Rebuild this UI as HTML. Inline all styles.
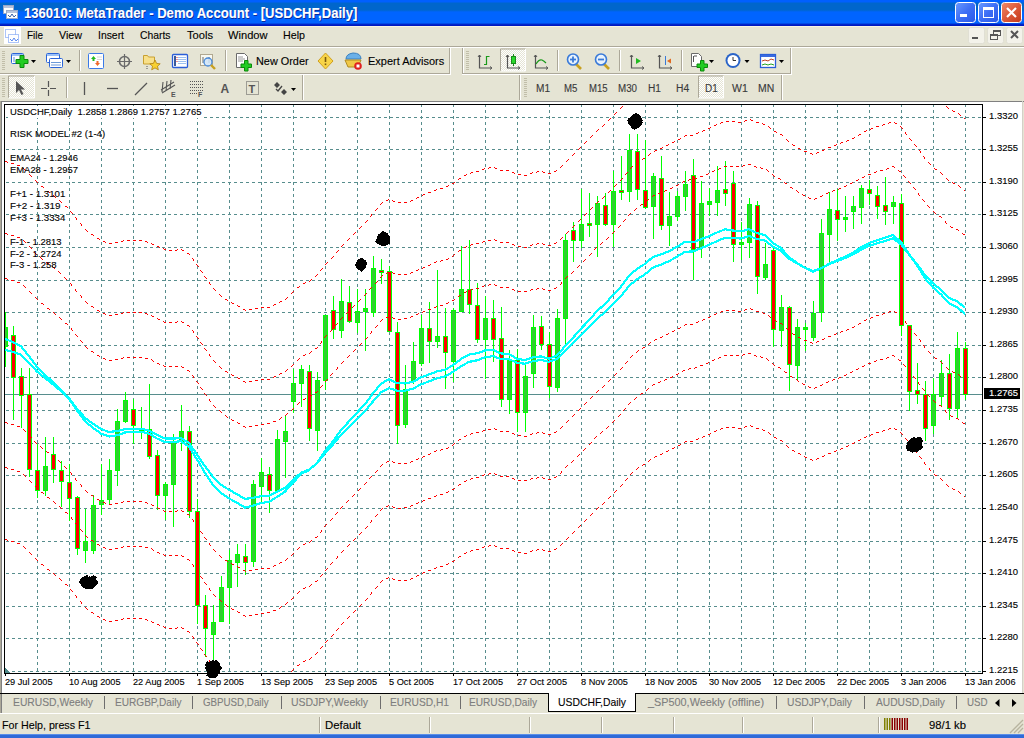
<!DOCTYPE html>
<html><head><meta charset="utf-8">
<style>
*{margin:0;padding:0;box-sizing:border-box}
html,body{width:1024px;height:738px;overflow:hidden;background:#e5e4d4;font-family:"Liberation Sans",sans-serif;color:#000;position:relative}
.abs{position:absolute}
.tx{position:absolute;white-space:nowrap;-webkit-text-stroke:0.12px currentColor}
</style></head><body>
<div class="abs" style="left:0;top:0;width:1024px;height:26px;background:linear-gradient(to bottom,#0060ff 0px,#0060ff 2px,#0066cc 3px,#0066cc 10px,#0064ff 12px,#0064ff 23px,#0030d0 24px,#0018c0 25px,#0018c0 26px)"></div>
<div class="tx" style="left:24px;top:6.35px;font-size:14px;line-height:14px;color:#fff;font-weight:bold;transform:scaleX(0.935);transform-origin:0 0;text-shadow:1px 1px 0 #0a2a9a;">136010: MetaTrader - Demo Account - [USDCHF,Daily]</div>
<svg class="abs" style="left:0;top:0" width="24" height="26">
<rect x="3.5" y="5.5" width="10" height="8" fill="#fff" stroke="#9aa8c8"/><rect x="4" y="6" width="9" height="2" fill="#b8c4dc"/>
<rect x="6.5" y="10.5" width="11" height="8" fill="#fff" stroke="#9aa8c8"/><rect x="7" y="11" width="10" height="2" fill="#b8c4dc"/>
<path d="M8 15 l2 2 l2 -3 l2 3 l2 -2" stroke="#3b5fa8" fill="none" stroke-width="1"/>
</svg>
<svg class="abs" style="left:950px;top:0" width="74" height="26">
<defs>
<linearGradient id="bb" x1="0" y1="0" x2="1" y2="1"><stop offset="0" stop-color="#6a9aff"/><stop offset="0.5" stop-color="#3d6ef5"/><stop offset="1" stop-color="#2858e8"/></linearGradient>
<linearGradient id="rb" x1="0" y1="0" x2="1" y2="1"><stop offset="0" stop-color="#f08a6a"/><stop offset="0.5" stop-color="#dc5a3a"/><stop offset="1" stop-color="#c43a1c"/></linearGradient>
</defs>
<rect x="5.5" y="2.5" width="20" height="20" rx="3" fill="url(#bb)" stroke="#fff"/>
<rect x="10" y="14" width="7" height="3" fill="#fff"/>
<rect x="28.5" y="2.5" width="20" height="20" rx="3" fill="url(#bb)" stroke="#fff"/>
<rect x="33.5" y="7.5" width="10" height="10" fill="none" stroke="#fff"/><rect x="33" y="7" width="11" height="3" fill="#fff"/>
<rect x="51.5" y="2.5" width="20" height="20" rx="3" fill="url(#rb)" stroke="#fff"/>
<path d="M57 8 L66 17 M66 8 L57 17" stroke="#fff" stroke-width="2.2"/>
</svg>
<div class="abs" style="left:0;top:26px;width:1024px;height:1px;background:#f6f4e4"></div>
<svg class="abs" style="left:0;top:26px" width="24" height="20">
<rect x="4" y="1" width="17" height="17" fill="#fff"/>
<rect x="5.5" y="3.5" width="10" height="8" fill="none" stroke="#5a8af0" stroke-dasharray="1 1"/>
<rect x="8.5" y="8.5" width="10" height="8" fill="#fff" stroke="#5a8af0" stroke-dasharray="1 1"/>
<path d="M10 13 l2 2 l2 -3 l2 3 l2 -2" stroke="#5a8af0" fill="none" stroke-width="1"/>
</svg>
<div class="tx" style="left:27px;top:30.29px;font-size:11px;line-height:11px;color:#000;font-weight:normal;transform:scaleX(0.9026997245179064);transform-origin:0 0;">File</div>
<div class="tx" style="left:59px;top:30.29px;font-size:11px;line-height:11px;color:#000;font-weight:normal;transform:scaleX(0.9727809673289001);transform-origin:0 0;">View</div>
<div class="tx" style="left:98px;top:30.29px;font-size:11px;line-height:11px;color:#000;font-weight:normal;transform:scaleX(0.9450853714813106);transform-origin:0 0;">Insert</div>
<div class="tx" style="left:139.5px;top:30.29px;font-size:11px;line-height:11px;color:#000;font-weight:normal;transform:scaleX(0.9414034241620448);transform-origin:0 0;">Charts</div>
<div class="tx" style="left:186.5px;top:30.29px;font-size:11px;line-height:11px;color:#000;font-weight:normal;transform:scaleX(1.0124926318191325);transform-origin:0 0;">Tools</div>
<div class="tx" style="left:228px;top:30.29px;font-size:11px;line-height:11px;color:#000;font-weight:normal;transform:scaleX(1.0096350656482451);transform-origin:0 0;">Window</div>
<div class="tx" style="left:283px;top:30.29px;font-size:11px;line-height:11px;color:#000;font-weight:normal;transform:scaleX(0.9724596391263058);transform-origin:0 0;">Help</div>
<svg class="abs" style="left:964px;top:26px" width="60" height="20">
<rect x="4.5" y="1.5" width="16" height="16" rx="2" fill="#f3f2ea" stroke="#e0dfd4"/>
<rect x="8" y="11" width="6" height="2" fill="#555"/>
<rect x="23.5" y="1.5" width="16" height="16" rx="2" fill="#f3f2ea" stroke="#e0dfd4"/>
<rect x="29.5" y="4.5" width="7" height="5" fill="none" stroke="#555"/><rect x="29" y="4" width="8" height="2" fill="#555"/>
<rect x="26.5" y="8.5" width="7" height="5" fill="#f3f2ea" stroke="#555"/><rect x="26" y="8" width="8" height="2" fill="#555"/>
<rect x="42.5" y="1.5" width="16" height="16" rx="2" fill="#f3f2ea" stroke="#e0dfd4"/>
<path d="M47 5 L54 12 M54 5 L47 12" stroke="#555" stroke-width="2"/>
</svg>
<div class="abs" style="left:0;top:46px;width:1024px;height:1px;background:#aca899"></div>
<div class="abs" style="left:0;top:47px;width:1024px;height:1px;background:#fff"></div>
<div class="abs" style="left:0;top:73px;width:450px;height:1px;background:#aca899"></div>
<div class="abs" style="left:0;top:74px;width:451px;height:1px;background:#fff"></div>
<div class="abs" style="left:449px;top:48px;width:1px;height:26px;background:#aca899"></div>
<div class="abs" style="left:450px;top:48px;width:1px;height:26px;background:#fff"></div>
<div class="abs" style="left:462px;top:48px;width:1px;height:26px;background:#aca899"></div>
<div class="abs" style="left:463px;top:48px;width:1px;height:26px;background:#fff"></div>
<div class="abs" style="left:462px;top:73px;width:329px;height:1px;background:#aca899"></div>
<div class="abs" style="left:462px;top:74px;width:330px;height:1px;background:#fff"></div>
<div class="abs" style="left:790px;top:48px;width:1px;height:26px;background:#aca899"></div>
<div class="abs" style="left:791px;top:48px;width:1px;height:26px;background:#fff"></div>
<div class="abs" style="left:302px;top:75px;width:1px;height:25px;background:#aca899"></div>
<div class="abs" style="left:303px;top:75px;width:1px;height:25px;background:#fff"></div>
<div class="abs" style="left:519px;top:75px;width:1px;height:25px;background:#aca899"></div>
<div class="abs" style="left:520px;top:75px;width:1px;height:25px;background:#fff"></div>
<div class="abs" style="left:781px;top:75px;width:1px;height:25px;background:#aca899"></div>
<div class="abs" style="left:782px;top:75px;width:1px;height:25px;background:#fff"></div>
<svg class="abs" style="left:0;top:0" width="1024" height="101"><defs><pattern id="chk" width="2" height="2" patternUnits="userSpaceOnUse"><rect width="2" height="2" fill="#e5e4d4"/><rect width="1" height="1" fill="#fff"/><rect x="1" y="1" width="1" height="1" fill="#fff"/></pattern></defs><rect x="2" y="51" width="3" height="1" fill="#c1bea9"/><rect x="2" y="53" width="3" height="1" fill="#c1bea9"/><rect x="2" y="55" width="3" height="1" fill="#c1bea9"/><rect x="2" y="57" width="3" height="1" fill="#c1bea9"/><rect x="2" y="59" width="3" height="1" fill="#c1bea9"/><rect x="2" y="61" width="3" height="1" fill="#c1bea9"/><rect x="2" y="63" width="3" height="1" fill="#c1bea9"/><rect x="2" y="65" width="3" height="1" fill="#c1bea9"/><rect x="2" y="67" width="3" height="1" fill="#c1bea9"/><rect x="2" y="69" width="3" height="1" fill="#c1bea9"/><rect x="2" y="78" width="3" height="1" fill="#c1bea9"/><rect x="2" y="80" width="3" height="1" fill="#c1bea9"/><rect x="2" y="82" width="3" height="1" fill="#c1bea9"/><rect x="2" y="84" width="3" height="1" fill="#c1bea9"/><rect x="2" y="86" width="3" height="1" fill="#c1bea9"/><rect x="2" y="88" width="3" height="1" fill="#c1bea9"/><rect x="2" y="90" width="3" height="1" fill="#c1bea9"/><rect x="2" y="92" width="3" height="1" fill="#c1bea9"/><rect x="2" y="94" width="3" height="1" fill="#c1bea9"/><rect x="2" y="96" width="3" height="1" fill="#c1bea9"/><rect x="466" y="51" width="3" height="1" fill="#c1bea9"/><rect x="466" y="53" width="3" height="1" fill="#c1bea9"/><rect x="466" y="55" width="3" height="1" fill="#c1bea9"/><rect x="466" y="57" width="3" height="1" fill="#c1bea9"/><rect x="466" y="59" width="3" height="1" fill="#c1bea9"/><rect x="466" y="61" width="3" height="1" fill="#c1bea9"/><rect x="466" y="63" width="3" height="1" fill="#c1bea9"/><rect x="466" y="65" width="3" height="1" fill="#c1bea9"/><rect x="466" y="67" width="3" height="1" fill="#c1bea9"/><rect x="466" y="69" width="3" height="1" fill="#c1bea9"/><rect x="524" y="78" width="3" height="1" fill="#c1bea9"/><rect x="524" y="80" width="3" height="1" fill="#c1bea9"/><rect x="524" y="82" width="3" height="1" fill="#c1bea9"/><rect x="524" y="84" width="3" height="1" fill="#c1bea9"/><rect x="524" y="86" width="3" height="1" fill="#c1bea9"/><rect x="524" y="88" width="3" height="1" fill="#c1bea9"/><rect x="524" y="90" width="3" height="1" fill="#c1bea9"/><rect x="524" y="92" width="3" height="1" fill="#c1bea9"/><rect x="524" y="94" width="3" height="1" fill="#c1bea9"/><rect x="524" y="96" width="3" height="1" fill="#c1bea9"/><rect x="79" y="50" width="1" height="21" fill="#aca899"/><rect x="80" y="50" width="1" height="21" fill="#fff"/><rect x="225" y="50" width="1" height="21" fill="#aca899"/><rect x="226" y="50" width="1" height="21" fill="#fff"/><rect x="557" y="50" width="1" height="21" fill="#aca899"/><rect x="558" y="50" width="1" height="21" fill="#fff"/><rect x="619" y="50" width="1" height="21" fill="#aca899"/><rect x="620" y="50" width="1" height="21" fill="#fff"/><rect x="681" y="50" width="1" height="21" fill="#aca899"/><rect x="682" y="50" width="1" height="21" fill="#fff"/><rect x="66" y="77" width="1" height="21" fill="#aca899"/><rect x="67" y="77" width="1" height="21" fill="#fff"/><path d="M31 60 h5 l-2.5 3 z" fill="#000"/><path d="M66 60 h5 l-2.5 3 z" fill="#000"/><path d="M709 60 h5 l-2.5 3 z" fill="#000"/><path d="M744.5 60 h5 l-2.5 3 z" fill="#000"/><path d="M779 60 h5 l-2.5 3 z" fill="#000"/><path d="M291 88 h5 l-2.5 3 z" fill="#000"/><rect x="11.5" y="53.5" width="12" height="10" rx="1" fill="#fff" stroke="#2a64d8"/><rect x="12" y="54" width="11" height="2" fill="#9ac0f8"/><path d="M14 57 v5" stroke="#5c8ad8"/><path d="M20 55.5 h4 v4 h4 v4 h-4 v4 h-4 v-4 h-4 v-4 h4 z" fill="#22cc22" stroke="#0a8a0a"/><rect x="46.5" y="53.5" width="13" height="9" rx="1" fill="#fff" stroke="#2a64d8"/><rect x="47" y="54" width="12" height="2" fill="#9ac0f8"/><rect x="49.5" y="58.5" width="13" height="9" rx="1" fill="#fff" stroke="#2a64d8"/><path d="M51 62.5 h10 M51 65 h10" stroke="#6a9ad8"/><rect x="88.5" y="53.5" width="15" height="15" rx="1" fill="#fff" stroke="#3a7ae8"/><path d="M91 59 l2.5 -3 l2.5 3 h-1.5 v2 h-2 v-2 z" fill="#22bb22"/><path d="M95 63 l2.5 3 l2.5 -3 h-1.5 v-2 h-2 v2 z" fill="#ee6a2a"/><path d="M97 57 h5 M97 59.5 h5" stroke="#d8d8d8"/><circle cx="124.5" cy="61.5" r="5" fill="none" stroke="#6a6a6a" stroke-width="1.6"/><path d="M117 61.5 h15 M124.5 54 v15" stroke="#6a6a6a" stroke-width="1.2"/><path d="M143.5 55.5 h4 l1 1.5 h6 v7 h-11 z" fill="#f8e08a" stroke="#c8a030"/><path d="M155 60 l1.6 3.4 l3.6 .4 l-2.7 2.4 l.8 3.6 l-3.3 -1.9 l-3.3 1.9 l.8 -3.6 l-2.7 -2.4 l3.6 -.4 z" fill="#f8d030" stroke="#b08010" stroke-width="0.8"/><path d="M147 66 v4" stroke="#555" stroke-dasharray="1 1"/><rect x="172.5" y="54.5" width="15" height="13" rx="1" fill="#fff" stroke="#2a5ed8" stroke-width="1.3"/><rect x="174" y="56" width="2" height="10" fill="#3a5a9a"/><path d="M178 57.5 h8 M178 59.5 h8 M178 61.5 h8 M178 63.5 h8" stroke="#9cc0f0"/><path d="M176.5 57.5 h1 M176.5 59.5 h1 M176.5 61.5 h1" stroke="#e02020"/><rect x="200.5" y="54.5" width="12" height="11" fill="#f8f8f0" stroke="#b0a890"/><path d="M203 57 v6 M209 57 v6" stroke="#6a6a6a"/><circle cx="208" cy="62" r="4" fill="#cfe4f8" fill-opacity="0.85" stroke="#4a8ad8" stroke-width="1.3"/><path d="M211 65 l4 4" stroke="#c8a020" stroke-width="2.4"/><path d="M236.5 53.5 h8 l3 3 v11 h-11 z" fill="#fff" stroke="#6a6a6a"/><path d="M238 57 h5 M238 59 h7 M238 61 h5" stroke="#9a9a9a"/><path d="M244.5 60.5 h3.5 v3.5 h3.5 v3.5 h-3.5 v3.5 h-3.5 v-3.5 h-3.5 v-3.5 h3.5 z" fill="#22cc22" stroke="#0a8a0a"/><path d="M325.5 53 l7.5 8 l-7.5 8 l-7.5 -8 z" fill="#f8d448" stroke="#d0a020"/><path d="M325.5 57 v5" stroke="#7a5a10" stroke-width="1.6"/><rect x="324.7" y="63.5" width="1.6" height="1.6" fill="#7a5a10"/><path d="M346 59 q0 -5 7 -6 q8 0 8 6 z" fill="#6ab0e8" stroke="#3a80c0"/><path d="M345 60 h16 l-3 7 h-10 z" fill="#f0c848" stroke="#b08a20"/><circle cx="358" cy="66" r="3.8" fill="#e02020"/><rect x="356.5" y="64.5" width="3" height="3" fill="#fff"/><path d="M479.5 55 v13 h12" fill="none" stroke="#555" stroke-width="1.2"/><path d="M478 57 l1.5 -2 l1.5 2 M490 66.5 l2 1.5 l-2 1.5" fill="none" stroke="#555"/><path d="M486.5 56 v9 M484 64.5 h2.5 M486.5 56.5 h3" stroke="#1a9a1a" stroke-width="1.2"/><rect x="500" y="49" width="25" height="22" fill="url(#chk)"/><path d="M500.5 71 v-22 h25" fill="none" stroke="#aca899"/><path d="M525.5 49 v22 h-25" fill="none" stroke="#fff"/><path d="M507.5 55 v13 h12" fill="none" stroke="#555" stroke-width="1.2"/><path d="M506 57 l1.5 -2 l1.5 2 M518 66.5 l2 1.5 l-2 1.5" fill="none" stroke="#555"/><path d="M513.5 54 v12" stroke="#1a8a1a"/><rect x="511.5" y="56.5" width="4" height="7" fill="#2ad82a" stroke="#1a8a1a"/><path d="M535.5 55 v13 h12" fill="none" stroke="#555" stroke-width="1.2"/><path d="M534 57 l1.5 -2 l1.5 2 M546 66.5 l2 1.5 l-2 1.5" fill="none" stroke="#555"/><path d="M536 64 q3 -5 6 -4 q2 1 4 3" fill="none" stroke="#1a9a1a" stroke-width="1.2"/><path d="M576 64 l5 5" stroke="#c8a020" stroke-width="2.6"/><circle cx="573" cy="59.5" r="5.5" fill="#e8f2fc" stroke="#3a7ad8" stroke-width="1.6"/><path d="M570 59.5 h6" stroke="#3a7ad8" stroke-width="1.8"/><path d="M573 56.5 v6" stroke="#3a7ad8" stroke-width="1.8"/><path d="M604 64 l5 5" stroke="#c8a020" stroke-width="2.6"/><circle cx="601" cy="59.5" r="5.5" fill="#e8f2fc" stroke="#3a7ad8" stroke-width="1.6"/><path d="M598 59.5 h6" stroke="#3a7ad8" stroke-width="1.8"/><path d="M631.5 55 v13 h12" fill="none" stroke="#555" stroke-width="1.2"/><path d="M630 57 l1.5 -2 l1.5 2 M642 66.5 l2 1.5 l-2 1.5" fill="none" stroke="#555"/><path d="M636 58 v6 l5 -3 z" fill="#22bb22"/><path d="M659.5 55 v13 h12" fill="none" stroke="#555" stroke-width="1.2"/><path d="M658 57 l1.5 -2 l1.5 2 M670 66.5 l2 1.5 l-2 1.5" fill="none" stroke="#555"/><path d="M665.5 56 v9" stroke="#3a7ad8"/><path d="M667 61 l4 -2.5 v5 z" fill="#e06a20"/><path d="M691.5 53.5 h7 l3 3 v10 h-10 z" fill="#fff" stroke="#6a6a6a"/><path d="M693.5 56 v6 M694 56 h3" stroke="#555"/><path d="M700.5 60.5 h3.5 v3.5 h3.5 v3.5 h-3.5 v3.5 h-3.5 v-3.5 h-3.5 v-3.5 h3.5 z" fill="#22cc22" stroke="#0a8a0a"/><circle cx="733" cy="60.5" r="7.5" fill="#2a64c8"/><circle cx="733" cy="60.5" r="5.5" fill="#fff"/><path d="M733 57 v3.5 h3" stroke="#333" fill="none"/><rect x="760.5" y="54.5" width="15" height="13" fill="#fff" stroke="#2a5ed8" stroke-width="1.3"/><rect x="761" y="55" width="14" height="2" fill="#3a6ae0"/><path d="M762 61 l3 -1 l3 1 l3 -2 l3 1" stroke="#c04020" fill="none"/><path d="M762 65 l3 -1 l3 1 l3 -1 l3 1" stroke="#20a020" fill="none"/><rect x="8" y="76" width="26" height="22" fill="url(#chk)"/><path d="M8.5 98 v-22 h26" fill="none" stroke="#aca899"/><path d="M34.5 76 v22 h-26" fill="none" stroke="#fff"/><path d="M16 81 v12 l3 -3 l2.5 5 l2 -1 l-2.5 -4.5 h4 z" fill="#555"/><path d="M41 88.5 h6 M50 88.5 h6 M48.5 81 v6 M48.5 90 v6" stroke="#555" stroke-width="1.2"/><path d="M84.5 82 v13" stroke="#555" stroke-width="1.3"/><path d="M107 88.5 h11" stroke="#555" stroke-width="1.3"/><path d="M135 95 l12 -12" stroke="#555" stroke-width="1.3"/><path d="M161 90 l13 -8 M162 93 l13 -8 M163 82 l-1 10 M167 81 l-1 10 M171 80 l-1 9" stroke="#555" stroke-width="1.1"/><text x="171" y="97" font-size="7" font-weight="bold" fill="#555" font-family="Liberation Sans">E</text><path d="M190 81.5 h13 M190 84.5 h13 M190 87.5 h13 M190 90.5 h13 M190 93.5 h8" stroke="#555" stroke-dasharray="1 1"/><text x="198" y="97" font-size="7" font-weight="bold" fill="#555" font-family="Liberation Sans">F</text><text x="220.5" y="93" font-size="12" font-weight="bold" fill="#555" font-family="Liberation Sans">A</text><rect x="246.5" y="81.5" width="12" height="13" fill="none" stroke="#555" stroke-dasharray="1 1"/><text x="248.5" y="92.5" font-size="11" font-weight="bold" fill="#555" font-family="Liberation Sans">T</text><path d="M277 82 l3 3 l-3 3 l-3 -3 z M284 89 l3 3 l-3 3 l-3 -3 z" fill="#444"/><path d="M276 89 l2 2 l4 -5" stroke="#444" fill="none" stroke-width="1.3"/><rect x="698" y="76" width="25" height="22" fill="url(#chk)"/><path d="M698.5 98 v-22 h25" fill="none" stroke="#aca899"/><path d="M723.5 76 v22 h-25" fill="none" stroke="#fff"/></svg>
<div class="tx" style="left:255.5px;top:55.69px;font-size:11px;line-height:11px;color:#000;font-weight:normal;transform:scaleX(0.9891085381641891);transform-origin:0 0;">New Order</div>
<div class="tx" style="left:367.5px;top:55.69px;font-size:11px;line-height:11px;color:#000;font-weight:normal;transform:scaleX(0.9970548522671805);transform-origin:0 0;">Expert Advisors</div>
<div class="tx" style="left:535.5px;top:83.53px;font-size:10px;line-height:10px;color:#3a3a3a;font-weight:normal;transform:scaleX(1.0078031634446398);transform-origin:0 0;">M1</div>
<div class="tx" style="left:563.6px;top:83.53px;font-size:10px;line-height:10px;color:#3a3a3a;font-weight:normal;transform:scaleX(0.9646115992970123);transform-origin:0 0;">M5</div>
<div class="tx" style="left:589.4px;top:83.53px;font-size:10px;line-height:10px;color:#3a3a3a;font-weight:normal;transform:scaleX(0.9561445783132531);transform-origin:0 0;">M15</div>
<div class="tx" style="left:617.6px;top:83.53px;font-size:10px;line-height:10px;color:#3a3a3a;font-weight:normal;transform:scaleX(0.976706827309237);transform-origin:0 0;">M30</div>
<div class="tx" style="left:648.4px;top:83.53px;font-size:10px;line-height:10px;color:#3a3a3a;font-weight:normal;transform:scaleX(1.016959511077158);transform-origin:0 0;">H1</div>
<div class="tx" style="left:675.8px;top:83.53px;font-size:10px;line-height:10px;color:#3a3a3a;font-weight:normal;transform:scaleX(1.0326050420168067);transform-origin:0 0;">H4</div>
<div class="tx" style="left:704.5px;top:83.53px;font-size:10px;line-height:10px;color:#3a3a3a;font-weight:normal;transform:scaleX(0.9934912146676852);transform-origin:0 0;">D1</div>
<div class="tx" style="left:731.8px;top:83.53px;font-size:10px;line-height:10px;color:#3a3a3a;font-weight:normal;transform:scaleX(1.0466666666666666);transform-origin:0 0;">W1</div>
<div class="tx" style="left:758.2px;top:83.53px;font-size:10px;line-height:10px;color:#3a3a3a;font-weight:normal;transform:scaleX(1.0416828885400313);transform-origin:0 0;">MN</div>
<svg class="abs" style="left:0;top:0" width="1024" height="738">
<rect x="0" y="101" width="1024" height="1" fill="#808080"/>
<rect x="0" y="101" width="1" height="612" fill="#aca899"/>
<rect x="1" y="101" width="1" height="612" fill="#808080"/>
<rect x="2" y="102" width="1020" height="591" fill="#fff"/>
<rect x="1022" y="101" width="1" height="592" fill="#d4d0c8"/>
<rect x="4.5" y="104.5" width="978" height="569" fill="none" stroke="#000" shape-rendering="crispEdges"/>
<g shape-rendering="crispEdges">
<clipPath id="cp"><rect x="5" y="105" width="977" height="568"/></clipPath>
<g clip-path="url(#cp)">
<line x1="6" y1="117.5" x2="982" y2="117.5" stroke="#578d8d" stroke-dasharray="3 3"/>
<line x1="6" y1="149.5" x2="982" y2="149.5" stroke="#578d8d" stroke-dasharray="3 3"/>
<line x1="6" y1="182.5" x2="982" y2="182.5" stroke="#578d8d" stroke-dasharray="3 3"/>
<line x1="6" y1="214.5" x2="982" y2="214.5" stroke="#578d8d" stroke-dasharray="3 3"/>
<line x1="6" y1="247.5" x2="982" y2="247.5" stroke="#578d8d" stroke-dasharray="3 3"/>
<line x1="6" y1="280.5" x2="982" y2="280.5" stroke="#578d8d" stroke-dasharray="3 3"/>
<line x1="6" y1="312.5" x2="982" y2="312.5" stroke="#578d8d" stroke-dasharray="3 3"/>
<line x1="6" y1="345.5" x2="982" y2="345.5" stroke="#578d8d" stroke-dasharray="3 3"/>
<line x1="6" y1="377.5" x2="982" y2="377.5" stroke="#578d8d" stroke-dasharray="3 3"/>
<line x1="6" y1="410.5" x2="982" y2="410.5" stroke="#578d8d" stroke-dasharray="3 3"/>
<line x1="6" y1="443.5" x2="982" y2="443.5" stroke="#578d8d" stroke-dasharray="3 3"/>
<line x1="6" y1="475.5" x2="982" y2="475.5" stroke="#578d8d" stroke-dasharray="3 3"/>
<line x1="6" y1="508.5" x2="982" y2="508.5" stroke="#578d8d" stroke-dasharray="3 3"/>
<line x1="6" y1="541.5" x2="982" y2="541.5" stroke="#578d8d" stroke-dasharray="3 3"/>
<line x1="6" y1="573.5" x2="982" y2="573.5" stroke="#578d8d" stroke-dasharray="3 3"/>
<line x1="6" y1="606.5" x2="982" y2="606.5" stroke="#578d8d" stroke-dasharray="3 3"/>
<line x1="6" y1="638.5" x2="982" y2="638.5" stroke="#578d8d" stroke-dasharray="3 3"/>
<line x1="6" y1="671.5" x2="982" y2="671.5" stroke="#578d8d" stroke-dasharray="3 3"/>
<line x1="37.5" y1="104" x2="37.5" y2="673" stroke="#578d8d" stroke-dasharray="3 3"/>
<line x1="69.5" y1="104" x2="69.5" y2="673" stroke="#578d8d" stroke-dasharray="3 3"/>
<line x1="101.5" y1="104" x2="101.5" y2="673" stroke="#578d8d" stroke-dasharray="3 3"/>
<line x1="133.5" y1="104" x2="133.5" y2="673" stroke="#578d8d" stroke-dasharray="3 3"/>
<line x1="165.5" y1="104" x2="165.5" y2="673" stroke="#578d8d" stroke-dasharray="3 3"/>
<line x1="197.5" y1="104" x2="197.5" y2="673" stroke="#578d8d" stroke-dasharray="3 3"/>
<line x1="229.5" y1="104" x2="229.5" y2="673" stroke="#578d8d" stroke-dasharray="3 3"/>
<line x1="261.5" y1="104" x2="261.5" y2="673" stroke="#578d8d" stroke-dasharray="3 3"/>
<line x1="293.5" y1="104" x2="293.5" y2="673" stroke="#578d8d" stroke-dasharray="3 3"/>
<line x1="325.5" y1="104" x2="325.5" y2="673" stroke="#578d8d" stroke-dasharray="3 3"/>
<line x1="357.5" y1="104" x2="357.5" y2="673" stroke="#578d8d" stroke-dasharray="3 3"/>
<line x1="389.5" y1="104" x2="389.5" y2="673" stroke="#578d8d" stroke-dasharray="3 3"/>
<line x1="421.5" y1="104" x2="421.5" y2="673" stroke="#578d8d" stroke-dasharray="3 3"/>
<line x1="453.5" y1="104" x2="453.5" y2="673" stroke="#578d8d" stroke-dasharray="3 3"/>
<line x1="485.5" y1="104" x2="485.5" y2="673" stroke="#578d8d" stroke-dasharray="3 3"/>
<line x1="517.5" y1="104" x2="517.5" y2="673" stroke="#578d8d" stroke-dasharray="3 3"/>
<line x1="549.5" y1="104" x2="549.5" y2="673" stroke="#578d8d" stroke-dasharray="3 3"/>
<line x1="581.5" y1="104" x2="581.5" y2="673" stroke="#578d8d" stroke-dasharray="3 3"/>
<line x1="613.5" y1="104" x2="613.5" y2="673" stroke="#578d8d" stroke-dasharray="3 3"/>
<line x1="645.5" y1="104" x2="645.5" y2="673" stroke="#578d8d" stroke-dasharray="3 3"/>
<line x1="677.5" y1="104" x2="677.5" y2="673" stroke="#578d8d" stroke-dasharray="3 3"/>
<line x1="709.5" y1="104" x2="709.5" y2="673" stroke="#578d8d" stroke-dasharray="3 3"/>
<line x1="741.5" y1="104" x2="741.5" y2="673" stroke="#578d8d" stroke-dasharray="3 3"/>
<line x1="773.5" y1="104" x2="773.5" y2="673" stroke="#578d8d" stroke-dasharray="3 3"/>
<line x1="805.5" y1="104" x2="805.5" y2="673" stroke="#578d8d" stroke-dasharray="3 3"/>
<line x1="837.5" y1="104" x2="837.5" y2="673" stroke="#578d8d" stroke-dasharray="3 3"/>
<line x1="869.5" y1="104" x2="869.5" y2="673" stroke="#578d8d" stroke-dasharray="3 3"/>
<line x1="901.5" y1="104" x2="901.5" y2="673" stroke="#578d8d" stroke-dasharray="3 3"/>
<line x1="933.5" y1="104" x2="933.5" y2="673" stroke="#578d8d" stroke-dasharray="3 3"/>
<line x1="965.5" y1="104" x2="965.5" y2="673" stroke="#578d8d" stroke-dasharray="3 3"/>
<line x1="5" y1="394.5" x2="982" y2="394.5" stroke="#578d8d"/>
<rect x="5" y="312" width="1" height="55" fill="#00ff00"/>
<rect x="3.5" y="327.5" width="4" height="19" fill="#32cd32" stroke="#00ff00" stroke-width="1"/>
<rect x="13" y="326" width="1" height="94" fill="#00ff00"/>
<rect x="11.5" y="335.5" width="4" height="42" fill="#ff0000" stroke="#00ff00" stroke-width="1"/>
<rect x="21" y="368" width="1" height="60" fill="#00ff00"/>
<rect x="19.5" y="376.5" width="4" height="19" fill="#ff0000" stroke="#00ff00" stroke-width="1"/>
<rect x="29" y="368" width="1" height="109" fill="#00ff00"/>
<rect x="27.5" y="394.5" width="4" height="75" fill="#ff0000" stroke="#00ff00" stroke-width="1"/>
<rect x="37" y="444" width="1" height="54" fill="#00ff00"/>
<rect x="35.5" y="470.5" width="4" height="20" fill="#ff0000" stroke="#00ff00" stroke-width="1"/>
<rect x="45" y="437" width="1" height="59" fill="#00ff00"/>
<rect x="43.5" y="466.5" width="4" height="24" fill="#32cd32" stroke="#00ff00" stroke-width="1"/>
<rect x="53" y="437" width="1" height="46" fill="#00ff00"/>
<rect x="51.5" y="454.5" width="4" height="15" fill="#ff0000" stroke="#00ff00" stroke-width="1"/>
<rect x="61" y="461" width="1" height="46" fill="#00ff00"/>
<rect x="59.5" y="470.5" width="4" height="11" fill="#ff0000" stroke="#00ff00" stroke-width="1"/>
<rect x="69" y="464" width="1" height="57" fill="#00ff00"/>
<rect x="67.5" y="482.5" width="4" height="16" fill="#ff0000" stroke="#00ff00" stroke-width="1"/>
<rect x="77" y="496" width="1" height="59" fill="#00ff00"/>
<rect x="75.5" y="497.5" width="4" height="51" fill="#ff0000" stroke="#00ff00" stroke-width="1"/>
<rect x="85" y="509" width="1" height="54" fill="#00ff00"/>
<rect x="83.5" y="541.5" width="4" height="9" fill="#32cd32" stroke="#00ff00" stroke-width="1"/>
<rect x="93" y="495" width="1" height="59" fill="#00ff00"/>
<rect x="91.5" y="505.5" width="4" height="45" fill="#32cd32" stroke="#00ff00" stroke-width="1"/>
<rect x="101" y="464" width="1" height="51" fill="#00ff00"/>
<rect x="99.5" y="500.5" width="4" height="4" fill="#32cd32" stroke="#00ff00" stroke-width="1"/>
<rect x="109" y="459" width="1" height="46" fill="#00ff00"/>
<rect x="107.5" y="470.5" width="4" height="29" fill="#32cd32" stroke="#00ff00" stroke-width="1"/>
<rect x="117" y="409" width="1" height="77" fill="#00ff00"/>
<rect x="115.5" y="421.5" width="4" height="49" fill="#32cd32" stroke="#00ff00" stroke-width="1"/>
<rect x="125" y="392" width="1" height="31" fill="#00ff00"/>
<rect x="123.5" y="400.5" width="4" height="21" fill="#32cd32" stroke="#00ff00" stroke-width="1"/>
<rect x="133" y="399" width="1" height="45" fill="#00ff00"/>
<rect x="131.5" y="409.5" width="4" height="16" fill="#ff0000" stroke="#00ff00" stroke-width="1"/>
<rect x="141" y="407" width="1" height="32" fill="#00ff00"/>
<rect x="139.5" y="429.5" width="4" height="1" fill="#32cd32" stroke="#00ff00" stroke-width="1"/>
<rect x="149" y="384" width="1" height="75" fill="#00ff00"/>
<rect x="147.5" y="429.5" width="4" height="27" fill="#ff0000" stroke="#00ff00" stroke-width="1"/>
<rect x="157" y="450" width="1" height="60" fill="#00ff00"/>
<rect x="155.5" y="455.5" width="4" height="40" fill="#ff0000" stroke="#00ff00" stroke-width="1"/>
<rect x="165" y="482" width="1" height="38" fill="#00ff00"/>
<rect x="163.5" y="484.5" width="4" height="11" fill="#32cd32" stroke="#00ff00" stroke-width="1"/>
<rect x="173" y="434" width="1" height="93" fill="#00ff00"/>
<rect x="171.5" y="441.5" width="4" height="43" fill="#32cd32" stroke="#00ff00" stroke-width="1"/>
<rect x="181" y="405" width="1" height="46" fill="#00ff00"/>
<rect x="179.5" y="431.5" width="4" height="10" fill="#32cd32" stroke="#00ff00" stroke-width="1"/>
<rect x="189" y="426" width="1" height="92" fill="#00ff00"/>
<rect x="187.5" y="431.5" width="4" height="80" fill="#ff0000" stroke="#00ff00" stroke-width="1"/>
<rect x="197" y="499" width="1" height="125" fill="#00ff00"/>
<rect x="195.5" y="511.5" width="4" height="94" fill="#ff0000" stroke="#00ff00" stroke-width="1"/>
<rect x="205" y="595" width="1" height="62" fill="#00ff00"/>
<rect x="203.5" y="605.5" width="4" height="23" fill="#ff0000" stroke="#00ff00" stroke-width="1"/>
<rect x="213" y="605" width="1" height="57" fill="#00ff00"/>
<rect x="211.5" y="622.5" width="4" height="12" fill="#32cd32" stroke="#00ff00" stroke-width="1"/>
<rect x="221" y="576" width="1" height="46" fill="#00ff00"/>
<rect x="219.5" y="587.5" width="4" height="34" fill="#32cd32" stroke="#00ff00" stroke-width="1"/>
<rect x="229" y="550" width="1" height="74" fill="#00ff00"/>
<rect x="227.5" y="560.5" width="4" height="27" fill="#32cd32" stroke="#00ff00" stroke-width="1"/>
<rect x="237" y="544" width="1" height="43" fill="#00ff00"/>
<rect x="235.5" y="554.5" width="4" height="8" fill="#32cd32" stroke="#00ff00" stroke-width="1"/>
<rect x="245" y="544" width="1" height="31" fill="#00ff00"/>
<rect x="243.5" y="556.5" width="4" height="6" fill="#ff0000" stroke="#00ff00" stroke-width="1"/>
<rect x="253" y="480" width="1" height="87" fill="#00ff00"/>
<rect x="251.5" y="484.5" width="4" height="77" fill="#32cd32" stroke="#00ff00" stroke-width="1"/>
<rect x="261" y="458" width="1" height="44" fill="#00ff00"/>
<rect x="259.5" y="472.5" width="4" height="14" fill="#32cd32" stroke="#00ff00" stroke-width="1"/>
<rect x="269" y="467" width="1" height="46" fill="#00ff00"/>
<rect x="267.5" y="474.5" width="4" height="16" fill="#ff0000" stroke="#00ff00" stroke-width="1"/>
<rect x="277" y="430" width="1" height="61" fill="#00ff00"/>
<rect x="275.5" y="439.5" width="4" height="51" fill="#32cd32" stroke="#00ff00" stroke-width="1"/>
<rect x="285" y="416" width="1" height="62" fill="#00ff00"/>
<rect x="283.5" y="431.5" width="4" height="10" fill="#32cd32" stroke="#00ff00" stroke-width="1"/>
<rect x="293" y="369" width="1" height="44" fill="#00ff00"/>
<rect x="291.5" y="383.5" width="4" height="18" fill="#32cd32" stroke="#00ff00" stroke-width="1"/>
<rect x="301" y="365" width="1" height="42" fill="#00ff00"/>
<rect x="299.5" y="369.5" width="4" height="14" fill="#32cd32" stroke="#00ff00" stroke-width="1"/>
<rect x="309" y="365" width="1" height="76" fill="#00ff00"/>
<rect x="307.5" y="371.5" width="4" height="57" fill="#ff0000" stroke="#00ff00" stroke-width="1"/>
<rect x="317" y="372" width="1" height="79" fill="#00ff00"/>
<rect x="315.5" y="380.5" width="4" height="50" fill="#32cd32" stroke="#00ff00" stroke-width="1"/>
<rect x="325" y="315" width="1" height="75" fill="#00ff00"/>
<rect x="323.5" y="315.5" width="4" height="65" fill="#32cd32" stroke="#00ff00" stroke-width="1"/>
<rect x="333" y="296" width="1" height="43" fill="#00ff00"/>
<rect x="331.5" y="310.5" width="4" height="19" fill="#ff0000" stroke="#00ff00" stroke-width="1"/>
<rect x="341" y="279" width="1" height="59" fill="#00ff00"/>
<rect x="339.5" y="301.5" width="4" height="29" fill="#32cd32" stroke="#00ff00" stroke-width="1"/>
<rect x="349" y="286" width="1" height="37" fill="#00ff00"/>
<rect x="347.5" y="302.5" width="4" height="19" fill="#ff0000" stroke="#00ff00" stroke-width="1"/>
<rect x="357" y="289" width="1" height="44" fill="#00ff00"/>
<rect x="355.5" y="311.5" width="4" height="11" fill="#32cd32" stroke="#00ff00" stroke-width="1"/>
<rect x="365" y="289" width="1" height="62" fill="#00ff00"/>
<rect x="363.5" y="308.5" width="4" height="3" fill="#32cd32" stroke="#00ff00" stroke-width="1"/>
<rect x="373" y="256" width="1" height="61" fill="#00ff00"/>
<rect x="371.5" y="268.5" width="4" height="44" fill="#32cd32" stroke="#00ff00" stroke-width="1"/>
<rect x="381" y="259" width="1" height="25" fill="#00ff00"/>
<rect x="379.5" y="270.5" width="4" height="2" fill="#ff0000" stroke="#00ff00" stroke-width="1"/>
<rect x="389" y="266" width="1" height="66" fill="#00ff00"/>
<rect x="387.5" y="271.5" width="4" height="60" fill="#ff0000" stroke="#00ff00" stroke-width="1"/>
<rect x="397" y="322" width="1" height="122" fill="#00ff00"/>
<rect x="395.5" y="332.5" width="4" height="93" fill="#ff0000" stroke="#00ff00" stroke-width="1"/>
<rect x="405" y="365" width="1" height="63" fill="#00ff00"/>
<rect x="403.5" y="389.5" width="4" height="35" fill="#32cd32" stroke="#00ff00" stroke-width="1"/>
<rect x="413" y="342" width="1" height="42" fill="#00ff00"/>
<rect x="411.5" y="361.5" width="4" height="20" fill="#32cd32" stroke="#00ff00" stroke-width="1"/>
<rect x="421" y="315" width="1" height="51" fill="#00ff00"/>
<rect x="419.5" y="328.5" width="4" height="35" fill="#32cd32" stroke="#00ff00" stroke-width="1"/>
<rect x="429" y="302" width="1" height="61" fill="#00ff00"/>
<rect x="427.5" y="328.5" width="4" height="13" fill="#ff0000" stroke="#00ff00" stroke-width="1"/>
<rect x="437" y="270" width="1" height="78" fill="#00ff00"/>
<rect x="435.5" y="336.5" width="4" height="5" fill="#32cd32" stroke="#00ff00" stroke-width="1"/>
<rect x="445" y="308" width="1" height="81" fill="#00ff00"/>
<rect x="443.5" y="336.5" width="4" height="16" fill="#ff0000" stroke="#00ff00" stroke-width="1"/>
<rect x="453" y="308" width="1" height="74" fill="#00ff00"/>
<rect x="451.5" y="310.5" width="4" height="51" fill="#32cd32" stroke="#00ff00" stroke-width="1"/>
<rect x="461" y="246" width="1" height="66" fill="#00ff00"/>
<rect x="459.5" y="289.5" width="4" height="22" fill="#32cd32" stroke="#00ff00" stroke-width="1"/>
<rect x="469" y="240" width="1" height="74" fill="#00ff00"/>
<rect x="467.5" y="289.5" width="4" height="15" fill="#ff0000" stroke="#00ff00" stroke-width="1"/>
<rect x="477" y="283" width="1" height="60" fill="#00ff00"/>
<rect x="475.5" y="305.5" width="4" height="34" fill="#ff0000" stroke="#00ff00" stroke-width="1"/>
<rect x="485" y="296" width="1" height="83" fill="#00ff00"/>
<rect x="483.5" y="318.5" width="4" height="21" fill="#32cd32" stroke="#00ff00" stroke-width="1"/>
<rect x="493" y="300" width="1" height="62" fill="#00ff00"/>
<rect x="491.5" y="318.5" width="4" height="21" fill="#ff0000" stroke="#00ff00" stroke-width="1"/>
<rect x="501" y="307" width="1" height="100" fill="#00ff00"/>
<rect x="499.5" y="338.5" width="4" height="61" fill="#ff0000" stroke="#00ff00" stroke-width="1"/>
<rect x="509" y="350" width="1" height="64" fill="#00ff00"/>
<rect x="507.5" y="360.5" width="4" height="39" fill="#32cd32" stroke="#00ff00" stroke-width="1"/>
<rect x="517" y="349" width="1" height="83" fill="#00ff00"/>
<rect x="515.5" y="360.5" width="4" height="52" fill="#ff0000" stroke="#00ff00" stroke-width="1"/>
<rect x="525" y="364" width="1" height="68" fill="#00ff00"/>
<rect x="523.5" y="376.5" width="4" height="36" fill="#32cd32" stroke="#00ff00" stroke-width="1"/>
<rect x="533" y="315" width="1" height="73" fill="#00ff00"/>
<rect x="531.5" y="327.5" width="4" height="46" fill="#32cd32" stroke="#00ff00" stroke-width="1"/>
<rect x="541" y="316" width="1" height="34" fill="#00ff00"/>
<rect x="539.5" y="326.5" width="4" height="18" fill="#ff0000" stroke="#00ff00" stroke-width="1"/>
<rect x="549" y="332" width="1" height="66" fill="#00ff00"/>
<rect x="547.5" y="344.5" width="4" height="42" fill="#ff0000" stroke="#00ff00" stroke-width="1"/>
<rect x="557" y="309" width="1" height="83" fill="#00ff00"/>
<rect x="555.5" y="318.5" width="4" height="69" fill="#32cd32" stroke="#00ff00" stroke-width="1"/>
<rect x="565" y="234" width="1" height="111" fill="#00ff00"/>
<rect x="563.5" y="240.5" width="4" height="78" fill="#32cd32" stroke="#00ff00" stroke-width="1"/>
<rect x="573" y="222" width="1" height="40" fill="#00ff00"/>
<rect x="571.5" y="230.5" width="4" height="10" fill="#ff0000" stroke="#00ff00" stroke-width="1"/>
<rect x="581" y="189" width="1" height="59" fill="#00ff00"/>
<rect x="579.5" y="224.5" width="4" height="16" fill="#32cd32" stroke="#00ff00" stroke-width="1"/>
<rect x="589" y="193" width="1" height="44" fill="#00ff00"/>
<rect x="587.5" y="223.5" width="4" height="2" fill="#ff0000" stroke="#00ff00" stroke-width="1"/>
<rect x="597" y="196" width="1" height="61" fill="#00ff00"/>
<rect x="595.5" y="203.5" width="4" height="21" fill="#32cd32" stroke="#00ff00" stroke-width="1"/>
<rect x="605" y="193" width="1" height="33" fill="#00ff00"/>
<rect x="603.5" y="205.5" width="4" height="19" fill="#ff0000" stroke="#00ff00" stroke-width="1"/>
<rect x="613" y="171" width="1" height="76" fill="#00ff00"/>
<rect x="611.5" y="191.5" width="4" height="33" fill="#32cd32" stroke="#00ff00" stroke-width="1"/>
<rect x="621" y="156" width="1" height="44" fill="#00ff00"/>
<rect x="619.5" y="190.5" width="4" height="2" fill="#ff0000" stroke="#00ff00" stroke-width="1"/>
<rect x="629" y="134" width="1" height="68" fill="#00ff00"/>
<rect x="627.5" y="150.5" width="4" height="41" fill="#32cd32" stroke="#00ff00" stroke-width="1"/>
<rect x="637" y="134" width="1" height="66" fill="#00ff00"/>
<rect x="635.5" y="151.5" width="4" height="38" fill="#ff0000" stroke="#00ff00" stroke-width="1"/>
<rect x="645" y="140" width="1" height="69" fill="#00ff00"/>
<rect x="643.5" y="190.5" width="4" height="17" fill="#ff0000" stroke="#00ff00" stroke-width="1"/>
<rect x="653" y="173" width="1" height="66" fill="#00ff00"/>
<rect x="651.5" y="176.5" width="4" height="30" fill="#32cd32" stroke="#00ff00" stroke-width="1"/>
<rect x="661" y="156" width="1" height="74" fill="#00ff00"/>
<rect x="659.5" y="178.5" width="4" height="47" fill="#ff0000" stroke="#00ff00" stroke-width="1"/>
<rect x="669" y="192" width="1" height="54" fill="#00ff00"/>
<rect x="667.5" y="216.5" width="4" height="9" fill="#32cd32" stroke="#00ff00" stroke-width="1"/>
<rect x="677" y="191" width="1" height="30" fill="#00ff00"/>
<rect x="675.5" y="196.5" width="4" height="20" fill="#32cd32" stroke="#00ff00" stroke-width="1"/>
<rect x="685" y="171" width="1" height="40" fill="#00ff00"/>
<rect x="683.5" y="184.5" width="4" height="12" fill="#32cd32" stroke="#00ff00" stroke-width="1"/>
<rect x="693" y="159" width="1" height="121" fill="#00ff00"/>
<rect x="691.5" y="175.5" width="4" height="74" fill="#ff0000" stroke="#00ff00" stroke-width="1"/>
<rect x="701" y="181" width="1" height="77" fill="#00ff00"/>
<rect x="699.5" y="203.5" width="4" height="44" fill="#32cd32" stroke="#00ff00" stroke-width="1"/>
<rect x="709" y="188" width="1" height="28" fill="#00ff00"/>
<rect x="707.5" y="201.5" width="4" height="3" fill="#32cd32" stroke="#00ff00" stroke-width="1"/>
<rect x="717" y="166" width="1" height="50" fill="#00ff00"/>
<rect x="715.5" y="190.5" width="4" height="12" fill="#32cd32" stroke="#00ff00" stroke-width="1"/>
<rect x="725" y="161" width="1" height="45" fill="#00ff00"/>
<rect x="723.5" y="189.5" width="4" height="4" fill="#ff0000" stroke="#00ff00" stroke-width="1"/>
<rect x="733" y="171" width="1" height="91" fill="#00ff00"/>
<rect x="731.5" y="183.5" width="4" height="61" fill="#ff0000" stroke="#00ff00" stroke-width="1"/>
<rect x="741" y="222" width="1" height="38" fill="#00ff00"/>
<rect x="739.5" y="242.5" width="4" height="2" fill="#32cd32" stroke="#00ff00" stroke-width="1"/>
<rect x="749" y="198" width="1" height="60" fill="#00ff00"/>
<rect x="747.5" y="204.5" width="4" height="38" fill="#32cd32" stroke="#00ff00" stroke-width="1"/>
<rect x="757" y="201" width="1" height="93" fill="#00ff00"/>
<rect x="755.5" y="205.5" width="4" height="71" fill="#ff0000" stroke="#00ff00" stroke-width="1"/>
<rect x="765" y="243" width="1" height="37" fill="#00ff00"/>
<rect x="763.5" y="264.5" width="4" height="13" fill="#32cd32" stroke="#00ff00" stroke-width="1"/>
<rect x="773" y="246" width="1" height="101" fill="#00ff00"/>
<rect x="771.5" y="250.5" width="4" height="79" fill="#ff0000" stroke="#00ff00" stroke-width="1"/>
<rect x="781" y="295" width="1" height="52" fill="#00ff00"/>
<rect x="779.5" y="307.5" width="4" height="23" fill="#32cd32" stroke="#00ff00" stroke-width="1"/>
<rect x="789" y="306" width="1" height="85" fill="#00ff00"/>
<rect x="787.5" y="307.5" width="4" height="57" fill="#ff0000" stroke="#00ff00" stroke-width="1"/>
<rect x="797" y="319" width="1" height="61" fill="#00ff00"/>
<rect x="795.5" y="327.5" width="4" height="38" fill="#32cd32" stroke="#00ff00" stroke-width="1"/>
<rect x="805" y="323" width="1" height="28" fill="#00ff00"/>
<rect x="803.5" y="327.5" width="4" height="2" fill="#32cd32" stroke="#00ff00" stroke-width="1"/>
<rect x="813" y="301" width="1" height="40" fill="#00ff00"/>
<rect x="811.5" y="313.5" width="4" height="24" fill="#32cd32" stroke="#00ff00" stroke-width="1"/>
<rect x="821" y="219" width="1" height="103" fill="#00ff00"/>
<rect x="819.5" y="233.5" width="4" height="79" fill="#32cd32" stroke="#00ff00" stroke-width="1"/>
<rect x="829" y="192" width="1" height="71" fill="#00ff00"/>
<rect x="827.5" y="209.5" width="4" height="25" fill="#32cd32" stroke="#00ff00" stroke-width="1"/>
<rect x="837" y="189" width="1" height="52" fill="#00ff00"/>
<rect x="835.5" y="210.5" width="4" height="9" fill="#ff0000" stroke="#00ff00" stroke-width="1"/>
<rect x="845" y="196" width="1" height="36" fill="#00ff00"/>
<rect x="843.5" y="217.5" width="4" height="2" fill="#32cd32" stroke="#00ff00" stroke-width="1"/>
<rect x="853" y="196" width="1" height="33" fill="#00ff00"/>
<rect x="851.5" y="206.5" width="4" height="5" fill="#32cd32" stroke="#00ff00" stroke-width="1"/>
<rect x="861" y="185" width="1" height="39" fill="#00ff00"/>
<rect x="859.5" y="188.5" width="4" height="19" fill="#32cd32" stroke="#00ff00" stroke-width="1"/>
<rect x="869" y="180" width="1" height="25" fill="#00ff00"/>
<rect x="867.5" y="189.5" width="4" height="4" fill="#ff0000" stroke="#00ff00" stroke-width="1"/>
<rect x="877" y="186" width="1" height="33" fill="#00ff00"/>
<rect x="875.5" y="195.5" width="4" height="11" fill="#ff0000" stroke="#00ff00" stroke-width="1"/>
<rect x="885" y="177" width="1" height="48" fill="#00ff00"/>
<rect x="883.5" y="205.5" width="4" height="6" fill="#ff0000" stroke="#00ff00" stroke-width="1"/>
<rect x="893" y="196" width="1" height="28" fill="#00ff00"/>
<rect x="891.5" y="202.5" width="4" height="4" fill="#32cd32" stroke="#00ff00" stroke-width="1"/>
<rect x="901" y="194" width="1" height="142" fill="#00ff00"/>
<rect x="899.5" y="203.5" width="4" height="122" fill="#ff0000" stroke="#00ff00" stroke-width="1"/>
<rect x="909" y="325" width="1" height="86" fill="#00ff00"/>
<rect x="907.5" y="325.5" width="4" height="66" fill="#ff0000" stroke="#00ff00" stroke-width="1"/>
<rect x="917" y="363" width="1" height="41" fill="#00ff00"/>
<rect x="915.5" y="390.5" width="4" height="4" fill="#ff0000" stroke="#00ff00" stroke-width="1"/>
<rect x="925" y="381" width="1" height="60" fill="#00ff00"/>
<rect x="923.5" y="394.5" width="4" height="34" fill="#ff0000" stroke="#00ff00" stroke-width="1"/>
<rect x="933" y="378" width="1" height="56" fill="#00ff00"/>
<rect x="931.5" y="394.5" width="4" height="31" fill="#32cd32" stroke="#00ff00" stroke-width="1"/>
<rect x="941" y="360" width="1" height="46" fill="#00ff00"/>
<rect x="939.5" y="373.5" width="4" height="23" fill="#32cd32" stroke="#00ff00" stroke-width="1"/>
<rect x="949" y="354" width="1" height="66" fill="#00ff00"/>
<rect x="947.5" y="373.5" width="4" height="35" fill="#ff0000" stroke="#00ff00" stroke-width="1"/>
<rect x="957" y="332" width="1" height="86" fill="#00ff00"/>
<rect x="955.5" y="348.5" width="4" height="60" fill="#32cd32" stroke="#00ff00" stroke-width="1"/>
<rect x="965" y="342" width="1" height="58" fill="#00ff00"/>
<rect x="963.5" y="348.5" width="4" height="46" fill="#ff0000" stroke="#00ff00" stroke-width="1"/>
<path d="M5 278.5h1M6 278.5h1M7 279.5h1M11 280.5h1M12 280.5h1M13 280.5h1M17 282.5h1M18 282.5h1M19 282.5h1M23 285.5h1M24 286.5h1M25 287.5h1M29 291.5h1M30 292.5h1M31 293.5h1M35 297.5h1M36 298.5h1M37 299.5h1M41 303.5h1M42 303.5h1M43 304.5h1M47 308.5h1M48 308.5h1M49 309.5h1M53 312.5h1M54 313.5h1M55 314.5h1M59 317.5h1M60 318.5h1M61 319.5h1M65 323.5h1M66 323.5h1M67 324.5h1M71 328.5h1M71 329.5h1M72 330.5h1M75 334.5h1M76 335.5h1M77 336.5h1M80 340.5h1M81 341.5h1M82 342.5h1M85 346.5h1M86 347.5h1M87 348.5h1M91 351.5h1M92 351.5h1M93 352.5h1M97 355.5h1M98 355.5h1M99 356.5h1M103 358.5h1M104 358.5h1M105 359.5h1M109 360.5h1M110 360.5h1M111 360.5h1M115 359.5h1M116 359.5h1M117 359.5h1M121 358.5h1M122 358.5h1M123 357.5h1M127 357.5h1M128 357.5h1M129 357.5h1M133 357.5h1M134 357.5h1M135 357.5h1M139 357.5h1M140 357.5h1M141 357.5h1M145 358.5h1M146 358.5h1M147 358.5h1M151 359.5h1M152 360.5h1M153 361.5h1M157 363.5h1M158 363.5h1M159 364.5h1M163 365.5h1M164 366.5h1M165 366.5h1M169 366.5h1M170 366.5h1M171 366.5h1M175 366.5h1M176 366.5h1M177 366.5h1M181 366.5h1M182 367.5h1M183 367.5h1M187 370.5h1M188 370.5h1M189 371.5h1M192 375.5h1M193 376.5h1M193 377.5h1M196 381.5h1M197 382.5h1M198 383.5h1M200 387.5h1M201 388.5h1M202 389.5h1M204 393.5h1M205 394.5h1M206 395.5h1M209 399.5h1M209 400.5h1M210 401.5h1M213 405.5h1M214 406.5h1M215 407.5h1M219 410.5h1M220 411.5h1M221 412.5h1M225 415.5h1M226 416.5h1M227 417.5h1M231 419.5h1M232 420.5h1M233 420.5h1M237 422.5h1M238 423.5h1M239 423.5h1M243 426.5h1M244 426.5h1M245 427.5h1M249 426.5h1M250 426.5h1M251 426.5h1M255 425.5h1M256 425.5h1M257 425.5h1M261 424.5h1M262 424.5h1M263 424.5h1M267 423.5h1M268 423.5h1M269 423.5h1M273 421.5h1M274 421.5h1M275 421.5h1M279 419.5h1M280 418.5h1M281 417.5h1M285 415.5h1M286 414.5h1M287 413.5h1M291 410.5h1M292 409.5h1M293 408.5h1M297 404.5h1M298 403.5h1M299 402.5h1M303 399.5h1M304 399.5h1M305 398.5h1M309 397.5h1M310 396.5h1M311 395.5h1M315 392.5h1M316 392.5h1M317 391.5h1M320 387.5h1M321 386.5h1M322 385.5h1M325 381.5h1M326 380.5h1M327 379.5h1M330 375.5h1M331 374.5h1M332 373.5h1M336 369.5h1M337 368.5h1M337 367.5h1M341 363.5h1M342 362.5h1M343 361.5h1M347 357.5h1M348 356.5h1M349 355.5h1M353 351.5h1M354 350.5h1M355 349.5h1M359 345.5h1M360 344.5h1M361 343.5h1M365 339.5h1M366 338.5h1M367 337.5h1M370 333.5h1M371 332.5h1M371 331.5h1M375 327.5h1M376 326.5h1M377 325.5h1M380 321.5h1M381 320.5h1M382 319.5h1M386 317.5h1M387 317.5h1M388 316.5h1M392 317.5h1M393 318.5h1M394 318.5h1M398 319.5h1M399 319.5h1M400 319.5h1M404 318.5h1M405 318.5h1M406 318.5h1M410 317.5h1M411 316.5h1M412 316.5h1M416 314.5h1M417 314.5h1M418 313.5h1M422 312.5h1M423 311.5h1M424 311.5h1M428 309.5h1M429 309.5h1M430 309.5h1M434 307.5h1M435 307.5h1M436 306.5h1M440 305.5h1M441 305.5h1M442 305.5h1M446 303.5h1M447 303.5h1M448 302.5h1M452 300.5h1M453 300.5h1M454 299.5h1M458 296.5h1M459 295.5h1M460 295.5h1M464 292.5h1M465 292.5h1M466 291.5h1M470 290.5h1M471 289.5h1M472 289.5h1M476 288.5h1M477 288.5h1M478 288.5h1M482 286.5h1M483 286.5h1M484 285.5h1M488 285.5h1M489 284.5h1M490 284.5h1M494 284.5h1M495 285.5h1M496 285.5h1M500 287.5h1M501 287.5h1M502 287.5h1M506 287.5h1M507 287.5h1M508 287.5h1M512 289.5h1M513 289.5h1M514 290.5h1M518 291.5h1M519 291.5h1M520 291.5h1M524 291.5h1M525 291.5h1M526 291.5h1M530 290.5h1M531 289.5h1M532 289.5h1M536 289.5h1M537 288.5h1M538 288.5h1M542 288.5h1M543 289.5h1M544 289.5h1M548 290.5h1M549 290.5h1M550 290.5h1M554 288.5h1M555 288.5h1M556 287.5h1M560 284.5h1M561 283.5h1M561 282.5h1M565 278.5h1M566 277.5h1M567 276.5h1M571 273.5h1M572 272.5h1M573 271.5h1M577 267.5h1M578 266.5h1M579 265.5h1M583 261.5h1M584 260.5h1M585 259.5h1M589 255.5h1M590 254.5h1M591 253.5h1M594 249.5h1M595 248.5h1M596 247.5h1M600 244.5h1M601 243.5h1M602 242.5h1M606 239.5h1M607 238.5h1M608 237.5h1M612 233.5h1M613 232.5h1M614 231.5h1M618 227.5h1M619 226.5h1M620 225.5h1M623 221.5h1M624 220.5h1M625 219.5h1M628 215.5h1M629 214.5h1M630 213.5h1M634 210.5h1M635 209.5h1M636 208.5h1M640 205.5h1M641 204.5h1M642 204.5h1M646 201.5h1M647 200.5h1M648 199.5h1M652 196.5h1M653 195.5h1M654 195.5h1M658 193.5h1M659 193.5h1M660 192.5h1M664 191.5h1M665 190.5h1M666 190.5h1M670 188.5h1M671 188.5h1M672 187.5h1M676 185.5h1M677 185.5h1M678 184.5h1M682 182.5h1M683 181.5h1M684 181.5h1M688 180.5h1M689 179.5h1M690 179.5h1M694 179.5h1M695 178.5h1M696 178.5h1M700 176.5h1M701 176.5h1M702 176.5h1M706 174.5h1M707 174.5h1M708 173.5h1M712 171.5h1M713 171.5h1M714 170.5h1M718 169.5h1M719 168.5h1M720 168.5h1M724 166.5h1M725 166.5h1M726 166.5h1M730 166.5h1M731 166.5h1M732 166.5h1M736 166.5h1M737 166.5h1M738 166.5h1M742 166.5h1M743 165.5h1M744 165.5h1M748 164.5h1M749 164.5h1M750 164.5h1M754 166.5h1M755 166.5h1M756 167.5h1M760 167.5h1M761 168.5h1M762 168.5h1M766 169.5h1M767 170.5h1M768 171.5h1M772 174.5h1M773 175.5h1M774 176.5h1M778 178.5h1M779 178.5h1M780 179.5h1M784 182.5h1M785 183.5h1M786 183.5h1M790 187.5h1M791 187.5h1M792 188.5h1M796 190.5h1M797 191.5h1M798 192.5h1M802 194.5h1M803 195.5h1M804 195.5h1M808 197.5h1M809 198.5h1M810 198.5h1M814 199.5h1M815 198.5h1M816 198.5h1M820 196.5h1M821 196.5h1M822 195.5h1M826 193.5h1M827 193.5h1M828 192.5h1M832 191.5h1M833 190.5h1M834 190.5h1M838 189.5h1M839 188.5h1M840 188.5h1M844 186.5h1M845 186.5h1M846 185.5h1M850 183.5h1M851 183.5h1M852 182.5h1M856 180.5h1M857 180.5h1M858 179.5h1M862 177.5h1M863 177.5h1M864 176.5h1M868 174.5h1M869 174.5h1M870 174.5h1M874 172.5h1M875 172.5h1M876 171.5h1M880 170.5h1M881 170.5h1M882 170.5h1M886 169.5h1M887 168.5h1M888 168.5h1M892 166.5h1M893 166.5h1M894 167.5h1M898 170.5h1M899 171.5h1M900 171.5h1M903 175.5h1M904 176.5h1M905 177.5h1M908 181.5h1M909 182.5h1M910 183.5h1M913 187.5h1M914 188.5h1M915 189.5h1M918 193.5h1M918 194.5h1M919 195.5h1M922 199.5h1M923 200.5h1M924 201.5h1M927 205.5h1M928 206.5h1M929 207.5h1M933 211.5h1M934 212.5h1M935 213.5h1M939 216.5h1M940 216.5h1M941 217.5h1M945 221.5h1M945 222.5h1M946 223.5h1M950 226.5h1M951 227.5h1M952 227.5h1M956 229.5h1M957 229.5h1M958 230.5h1M962 233.5h1M963 234.5h1M964 234.5h1" stroke="#ff0000" fill="none"/>
<path d="M5 422.5h1M6 422.5h1M7 423.5h1M11 424.5h1M12 424.5h1M13 424.5h1M17 426.5h1M18 426.5h1M19 426.5h1M23 429.5h1M24 430.5h1M25 431.5h1M29 435.5h1M30 436.5h1M31 437.5h1M34 441.5h1M35 442.5h1M36 443.5h1M40 446.5h1M41 447.5h1M42 448.5h1M46 451.5h1M47 452.5h1M48 452.5h1M52 455.5h1M53 456.5h1M54 457.5h1M58 460.5h1M59 461.5h1M60 462.5h1M64 466.5h1M65 467.5h1M66 468.5h1M70 472.5h1M71 473.5h1M71 474.5h1M75 478.5h1M75 479.5h1M76 480.5h1M80 484.5h1M81 485.5h1M81 486.5h1M85 490.5h1M86 491.5h1M87 492.5h1M91 495.5h1M92 495.5h1M93 496.5h1M97 499.5h1M98 499.5h1M99 500.5h1M103 502.5h1M104 502.5h1M105 503.5h1M109 504.5h1M110 504.5h1M111 504.5h1M115 503.5h1M116 503.5h1M117 503.5h1M121 502.5h1M122 502.5h1M123 501.5h1M127 501.5h1M128 501.5h1M129 501.5h1M133 501.5h1M134 501.5h1M135 501.5h1M139 501.5h1M140 501.5h1M141 501.5h1M145 502.5h1M146 502.5h1M147 503.5h1M151 504.5h1M152 505.5h1M153 505.5h1M157 507.5h1M158 508.5h1M159 508.5h1M163 510.5h1M164 511.5h1M165 511.5h1M169 511.5h1M170 511.5h1M171 511.5h1M175 511.5h1M176 511.5h1M177 510.5h1M181 510.5h1M182 511.5h1M183 511.5h1M187 514.5h1M188 514.5h1M189 515.5h1M192 519.5h1M193 520.5h1M193 521.5h1M196 525.5h1M197 526.5h1M198 527.5h1M200 531.5h1M201 532.5h1M202 533.5h1M204 537.5h1M205 538.5h1M206 539.5h1M209 543.5h1M209 544.5h1M210 545.5h1M213 549.5h1M214 550.5h1M215 551.5h1M219 555.5h1M220 556.5h1M221 557.5h1M225 560.5h1M226 560.5h1M227 561.5h1M231 563.5h1M232 564.5h1M233 564.5h1M237 566.5h1M238 567.5h1M239 567.5h1M243 570.5h1M244 570.5h1M245 571.5h1M249 570.5h1M250 570.5h1M251 570.5h1M255 569.5h1M256 569.5h1M257 569.5h1M261 568.5h1M262 568.5h1M263 568.5h1M267 568.5h1M268 568.5h1M269 568.5h1M273 566.5h1M274 565.5h1M275 565.5h1M279 563.5h1M280 562.5h1M281 562.5h1M285 560.5h1M286 559.5h1M287 558.5h1M291 555.5h1M292 554.5h1M293 553.5h1M297 549.5h1M298 548.5h1M299 547.5h1M303 544.5h1M304 544.5h1M305 543.5h1M309 542.5h1M310 541.5h1M311 540.5h1M315 537.5h1M316 537.5h1M317 536.5h1M320 532.5h1M321 531.5h1M321 530.5h1M324 526.5h1M325 525.5h1M326 524.5h1M330 520.5h1M331 519.5h1M332 518.5h1M335 514.5h1M336 513.5h1M337 512.5h1M340 508.5h1M341 507.5h1M342 506.5h1M346 502.5h1M347 501.5h1M348 500.5h1M352 496.5h1M353 495.5h1M354 494.5h1M358 490.5h1M359 489.5h1M360 488.5h1M364 484.5h1M365 483.5h1M366 482.5h1M369 478.5h1M370 477.5h1M371 476.5h1M375 472.5h1M376 471.5h1M377 470.5h1M380 466.5h1M381 465.5h1M382 464.5h1M386 462.5h1M387 461.5h1M388 461.5h1M392 461.5h1M393 462.5h1M394 462.5h1M398 463.5h1M399 463.5h1M400 463.5h1M404 463.5h1M405 463.5h1M406 463.5h1M410 462.5h1M411 461.5h1M412 461.5h1M416 459.5h1M417 459.5h1M418 458.5h1M422 457.5h1M423 456.5h1M424 456.5h1M428 454.5h1M429 454.5h1M430 453.5h1M434 451.5h1M435 451.5h1M436 450.5h1M440 450.5h1M441 449.5h1M442 449.5h1M446 448.5h1M447 448.5h1M448 447.5h1M452 445.5h1M453 444.5h1M454 443.5h1M458 440.5h1M459 439.5h1M460 439.5h1M464 436.5h1M465 436.5h1M466 435.5h1M470 434.5h1M471 433.5h1M472 433.5h1M476 432.5h1M477 432.5h1M478 432.5h1M482 431.5h1M483 430.5h1M484 430.5h1M488 429.5h1M489 429.5h1M490 429.5h1M494 428.5h1M495 429.5h1M496 429.5h1M500 431.5h1M501 431.5h1M502 431.5h1M506 431.5h1M507 431.5h1M508 431.5h1M512 433.5h1M513 433.5h1M514 434.5h1M518 435.5h1M519 435.5h1M520 435.5h1M524 436.5h1M525 436.5h1M526 436.5h1M530 434.5h1M531 434.5h1M532 433.5h1M536 433.5h1M537 432.5h1M538 432.5h1M542 432.5h1M543 433.5h1M544 433.5h1M548 434.5h1M549 434.5h1M550 434.5h1M554 432.5h1M555 432.5h1M556 431.5h1M560 428.5h1M561 427.5h1M562 426.5h1M566 422.5h1M567 421.5h1M568 420.5h1M572 416.5h1M573 415.5h1M574 414.5h1M578 410.5h1M579 409.5h1M580 408.5h1M584 404.5h1M585 403.5h1M586 402.5h1M590 398.5h1M591 397.5h1M592 396.5h1M596 392.5h1M597 391.5h1M598 390.5h1M602 387.5h1M603 386.5h1M604 385.5h1M608 381.5h1M609 380.5h1M610 379.5h1M614 375.5h1M615 374.5h1M616 373.5h1M620 369.5h1M621 368.5h1M622 367.5h1M625 363.5h1M626 362.5h1M627 361.5h1M630 357.5h1M631 356.5h1M632 355.5h1M636 352.5h1M637 351.5h1M638 350.5h1M642 348.5h1M643 347.5h1M644 347.5h1M648 344.5h1M649 343.5h1M650 342.5h1M654 340.5h1M655 339.5h1M656 339.5h1M660 337.5h1M661 337.5h1M662 336.5h1M666 334.5h1M667 334.5h1M668 333.5h1M672 331.5h1M673 331.5h1M674 330.5h1M678 328.5h1M679 328.5h1M680 327.5h1M684 325.5h1M685 324.5h1M686 324.5h1M690 324.5h1M691 324.5h1M692 324.5h1M696 322.5h1M697 322.5h1M698 321.5h1M702 320.5h1M703 319.5h1M704 319.5h1M708 317.5h1M709 317.5h1M710 316.5h1M714 314.5h1M715 314.5h1M716 313.5h1M720 312.5h1M721 311.5h1M722 311.5h1M726 310.5h1M727 310.5h1M728 310.5h1M732 310.5h1M733 310.5h1M734 310.5h1M738 311.5h1M739 311.5h1M740 311.5h1M744 310.5h1M745 309.5h1M746 309.5h1M750 308.5h1M751 309.5h1M752 309.5h1M756 311.5h1M757 311.5h1M758 311.5h1M762 312.5h1M763 313.5h1M764 313.5h1M768 315.5h1M769 316.5h1M770 317.5h1M774 320.5h1M775 320.5h1M776 321.5h1M780 323.5h1M781 323.5h1M782 324.5h1M786 328.5h1M787 329.5h1M788 330.5h1M792 333.5h1M793 334.5h1M794 334.5h1M798 337.5h1M799 337.5h1M800 338.5h1M804 340.5h1M805 340.5h1M806 340.5h1M810 342.5h1M811 342.5h1M812 343.5h1M816 342.5h1M817 341.5h1M818 341.5h1M822 339.5h1M823 339.5h1M824 338.5h1M828 336.5h1M829 336.5h1M830 336.5h1M834 334.5h1M835 334.5h1M836 333.5h1M840 332.5h1M841 331.5h1M842 331.5h1M846 330.5h1M847 329.5h1M848 329.5h1M852 327.5h1M853 327.5h1M854 326.5h1M858 324.5h1M859 323.5h1M860 323.5h1M864 320.5h1M865 320.5h1M866 319.5h1M870 318.5h1M871 317.5h1M872 317.5h1M876 315.5h1M877 315.5h1M878 315.5h1M882 314.5h1M883 313.5h1M884 313.5h1M888 312.5h1M889 311.5h1M890 311.5h1M894 311.5h1M895 312.5h1M896 312.5h1M900 315.5h1M901 316.5h1M902 317.5h1M905 321.5h1M905 322.5h1M906 323.5h1M909 327.5h1M910 328.5h1M911 329.5h1M914 333.5h1M915 334.5h1M916 335.5h1M919 339.5h1M920 340.5h1M920 341.5h1M923 345.5h1M924 346.5h1M924 347.5h1M928 351.5h1M929 352.5h1M930 353.5h1M934 357.5h1M935 358.5h1M936 358.5h1M940 361.5h1M941 362.5h1M942 363.5h1M946 367.5h1M947 368.5h1M948 369.5h1M952 371.5h1M953 372.5h1M954 372.5h1M958 374.5h1M959 375.5h1M960 376.5h1M964 379.5h1" stroke="#ff0000" fill="none"/>
<path d="M5 233.5h1M6 233.5h1M7 234.5h1M11 235.5h1M12 235.5h1M13 235.5h1M17 237.5h1M18 237.5h1M19 237.5h1M23 240.5h1M24 241.5h1M25 242.5h1M29 246.5h1M30 247.5h1M31 248.5h1M34 252.5h1M35 253.5h1M36 254.5h1M40 257.5h1M41 258.5h1M42 259.5h1M46 262.5h1M47 263.5h1M48 263.5h1M52 266.5h1M53 267.5h1M54 268.5h1M58 271.5h1M59 272.5h1M60 273.5h1M64 277.5h1M65 278.5h1M66 279.5h1M70 283.5h1M71 284.5h1M71 285.5h1M75 289.5h1M75 290.5h1M76 291.5h1M80 295.5h1M81 296.5h1M81 297.5h1M85 301.5h1M86 302.5h1M87 303.5h1M91 306.5h1M92 306.5h1M93 307.5h1M97 310.5h1M98 310.5h1M99 311.5h1M103 313.5h1M104 313.5h1M105 314.5h1M109 315.5h1M110 315.5h1M111 315.5h1M115 314.5h1M116 314.5h1M117 314.5h1M121 313.5h1M122 313.5h1M123 312.5h1M127 312.5h1M128 312.5h1M129 312.5h1M133 312.5h1M134 312.5h1M135 312.5h1M139 312.5h1M140 312.5h1M141 312.5h1M145 313.5h1M146 313.5h1M147 314.5h1M151 315.5h1M152 316.5h1M153 316.5h1M157 318.5h1M158 319.5h1M159 319.5h1M163 321.5h1M164 322.5h1M165 322.5h1M169 322.5h1M170 322.5h1M171 322.5h1M175 322.5h1M176 322.5h1M177 321.5h1M181 321.5h1M182 322.5h1M183 322.5h1M187 325.5h1M188 325.5h1M189 326.5h1M192 330.5h1M193 331.5h1M193 332.5h1M196 336.5h1M197 337.5h1M198 338.5h1M200 342.5h1M201 343.5h1M202 344.5h1M204 348.5h1M205 349.5h1M206 350.5h1M209 354.5h1M209 355.5h1M210 356.5h1M213 360.5h1M214 361.5h1M215 362.5h1M219 366.5h1M220 367.5h1M221 368.5h1M225 371.5h1M226 371.5h1M227 372.5h1M231 374.5h1M232 375.5h1M233 375.5h1M237 377.5h1M238 378.5h1M239 378.5h1M243 381.5h1M244 381.5h1M245 382.5h1M249 381.5h1M250 381.5h1M251 381.5h1M255 380.5h1M256 380.5h1M257 380.5h1M261 379.5h1M262 379.5h1M263 379.5h1M267 379.5h1M268 379.5h1M269 379.5h1M273 377.5h1M274 376.5h1M275 376.5h1M279 374.5h1M280 373.5h1M281 373.5h1M285 371.5h1M286 370.5h1M287 369.5h1M291 366.5h1M292 365.5h1M293 364.5h1M297 360.5h1M298 359.5h1M299 358.5h1M303 355.5h1M304 355.5h1M305 354.5h1M309 353.5h1M310 352.5h1M311 351.5h1M315 348.5h1M316 348.5h1M317 347.5h1M320 343.5h1M321 342.5h1M321 341.5h1M324 337.5h1M325 336.5h1M326 335.5h1M330 331.5h1M331 330.5h1M332 329.5h1M335 325.5h1M336 324.5h1M337 323.5h1M340 319.5h1M341 318.5h1M342 317.5h1M346 313.5h1M347 312.5h1M348 311.5h1M352 307.5h1M353 306.5h1M354 305.5h1M358 301.5h1M359 300.5h1M360 299.5h1M364 295.5h1M365 294.5h1M366 293.5h1M369 289.5h1M370 288.5h1M371 287.5h1M375 283.5h1M376 282.5h1M377 281.5h1M380 277.5h1M381 276.5h1M382 275.5h1M386 273.5h1M387 272.5h1M388 272.5h1M392 272.5h1M393 273.5h1M394 273.5h1M398 274.5h1M399 274.5h1M400 274.5h1M404 274.5h1M405 274.5h1M406 274.5h1M410 273.5h1M411 272.5h1M412 272.5h1M416 270.5h1M417 270.5h1M418 269.5h1M422 268.5h1M423 267.5h1M424 267.5h1M428 265.5h1M429 265.5h1M430 264.5h1M434 262.5h1M435 262.5h1M436 261.5h1M440 261.5h1M441 260.5h1M442 260.5h1M446 259.5h1M447 259.5h1M448 258.5h1M452 256.5h1M453 255.5h1M454 254.5h1M458 251.5h1M459 250.5h1M460 250.5h1M464 247.5h1M465 247.5h1M466 246.5h1M470 245.5h1M471 244.5h1M472 244.5h1M476 243.5h1M477 243.5h1M478 243.5h1M482 242.5h1M483 241.5h1M484 241.5h1M488 240.5h1M489 240.5h1M490 240.5h1M494 239.5h1M495 240.5h1M496 240.5h1M500 242.5h1M501 242.5h1M502 242.5h1M506 242.5h1M507 242.5h1M508 242.5h1M512 244.5h1M513 244.5h1M514 245.5h1M518 246.5h1M519 246.5h1M520 246.5h1M524 247.5h1M525 247.5h1M526 247.5h1M530 245.5h1M531 245.5h1M532 244.5h1M536 244.5h1M537 243.5h1M538 243.5h1M542 243.5h1M543 244.5h1M544 244.5h1M548 245.5h1M549 245.5h1M550 245.5h1M554 243.5h1M555 243.5h1M556 242.5h1M560 239.5h1M561 238.5h1M562 237.5h1M566 233.5h1M567 232.5h1M568 231.5h1M572 227.5h1M573 226.5h1M574 225.5h1M578 221.5h1M579 220.5h1M580 219.5h1M584 215.5h1M585 214.5h1M586 213.5h1M590 209.5h1M591 208.5h1M592 207.5h1M596 203.5h1M597 202.5h1M598 201.5h1M602 198.5h1M603 197.5h1M604 196.5h1M608 192.5h1M609 191.5h1M610 190.5h1M614 186.5h1M615 185.5h1M616 184.5h1M620 180.5h1M621 179.5h1M622 178.5h1M625 174.5h1M626 173.5h1M627 172.5h1M630 168.5h1M631 167.5h1M632 166.5h1M636 163.5h1M637 162.5h1M638 161.5h1M642 159.5h1M643 158.5h1M644 158.5h1M648 155.5h1M649 154.5h1M650 153.5h1M654 151.5h1M655 150.5h1M656 150.5h1M660 148.5h1M661 148.5h1M662 147.5h1M666 145.5h1M667 145.5h1M668 144.5h1M672 142.5h1M673 142.5h1M674 141.5h1M678 139.5h1M679 139.5h1M680 138.5h1M684 136.5h1M685 135.5h1M686 135.5h1M690 135.5h1M691 135.5h1M692 135.5h1M696 133.5h1M697 133.5h1M698 132.5h1M702 131.5h1M703 130.5h1M704 130.5h1M708 128.5h1M709 128.5h1M710 127.5h1M714 125.5h1M715 125.5h1M716 124.5h1M720 123.5h1M721 122.5h1M722 122.5h1M726 121.5h1M727 121.5h1M728 121.5h1M732 121.5h1M733 121.5h1M734 121.5h1M738 122.5h1M739 122.5h1M740 122.5h1M744 121.5h1M745 120.5h1M746 120.5h1M750 119.5h1M751 120.5h1M752 120.5h1M756 122.5h1M757 122.5h1M758 122.5h1M762 123.5h1M763 124.5h1M764 124.5h1M768 126.5h1M769 127.5h1M770 128.5h1M774 131.5h1M775 131.5h1M776 132.5h1M780 134.5h1M781 134.5h1M782 135.5h1M786 139.5h1M787 140.5h1M788 141.5h1M792 144.5h1M793 145.5h1M794 145.5h1M798 148.5h1M799 148.5h1M800 149.5h1M804 151.5h1M805 151.5h1M806 151.5h1M810 153.5h1M811 153.5h1M812 154.5h1M816 153.5h1M817 152.5h1M818 152.5h1M822 150.5h1M823 150.5h1M824 149.5h1M828 147.5h1M829 147.5h1M830 147.5h1M834 145.5h1M835 145.5h1M836 144.5h1M840 143.5h1M841 142.5h1M842 142.5h1M846 141.5h1M847 140.5h1M848 140.5h1M852 138.5h1M853 138.5h1M854 137.5h1M858 135.5h1M859 134.5h1M860 134.5h1M864 131.5h1M865 131.5h1M866 130.5h1M870 129.5h1M871 128.5h1M872 128.5h1M876 126.5h1M877 126.5h1M878 126.5h1M882 125.5h1M883 124.5h1M884 124.5h1M888 123.5h1M889 122.5h1M890 122.5h1M894 122.5h1M895 123.5h1M896 123.5h1M900 126.5h1M901 127.5h1M902 128.5h1M905 132.5h1M905 133.5h1M906 134.5h1M909 138.5h1M910 139.5h1M911 140.5h1M914 144.5h1M915 145.5h1M916 146.5h1M919 150.5h1M920 151.5h1M920 152.5h1M923 156.5h1M924 157.5h1M924 158.5h1M928 162.5h1M929 163.5h1M930 164.5h1M934 168.5h1M935 169.5h1M936 169.5h1M940 172.5h1M941 173.5h1M942 174.5h1M946 178.5h1M947 179.5h1M948 180.5h1M952 182.5h1M953 183.5h1M954 183.5h1M958 185.5h1M959 186.5h1M960 187.5h1M964 190.5h1" stroke="#ff0000" fill="none"/>
<path d="M5 467.5h1M6 467.5h1M7 468.5h1M11 469.5h1M12 469.5h1M13 469.5h1M17 471.5h1M18 471.5h1M19 471.5h1M23 474.5h1M24 475.5h1M25 476.5h1M29 480.5h1M30 481.5h1M31 482.5h1M35 486.5h1M36 487.5h1M37 488.5h1M41 492.5h1M42 492.5h1M43 493.5h1M47 497.5h1M48 497.5h1M49 498.5h1M53 501.5h1M54 502.5h1M55 503.5h1M59 506.5h1M60 507.5h1M61 508.5h1M65 512.5h1M66 512.5h1M67 513.5h1M71 517.5h1M71 518.5h1M72 519.5h1M75 523.5h1M76 524.5h1M77 525.5h1M80 529.5h1M81 530.5h1M82 531.5h1M85 535.5h1M86 536.5h1M87 537.5h1M91 540.5h1M92 540.5h1M93 541.5h1M97 544.5h1M98 544.5h1M99 545.5h1M103 547.5h1M104 547.5h1M105 548.5h1M109 549.5h1M110 549.5h1M111 549.5h1M115 548.5h1M116 548.5h1M117 548.5h1M121 547.5h1M122 547.5h1M123 546.5h1M127 546.5h1M128 546.5h1M129 546.5h1M133 546.5h1M134 546.5h1M135 546.5h1M139 546.5h1M140 546.5h1M141 546.5h1M145 547.5h1M146 547.5h1M147 547.5h1M151 548.5h1M152 549.5h1M153 550.5h1M157 552.5h1M158 552.5h1M159 553.5h1M163 554.5h1M164 555.5h1M165 555.5h1M169 555.5h1M170 555.5h1M171 555.5h1M175 555.5h1M176 555.5h1M177 555.5h1M181 555.5h1M182 556.5h1M183 556.5h1M187 559.5h1M188 559.5h1M189 560.5h1M192 564.5h1M193 565.5h1M193 566.5h1M196 570.5h1M197 571.5h1M198 572.5h1M200 576.5h1M201 577.5h1M202 578.5h1M204 582.5h1M205 583.5h1M206 584.5h1M209 588.5h1M209 589.5h1M210 590.5h1M213 594.5h1M214 595.5h1M215 596.5h1M219 599.5h1M220 600.5h1M221 601.5h1M225 604.5h1M226 605.5h1M227 606.5h1M231 608.5h1M232 609.5h1M233 609.5h1M237 611.5h1M238 612.5h1M239 612.5h1M243 615.5h1M244 615.5h1M245 616.5h1M249 615.5h1M250 615.5h1M251 615.5h1M255 614.5h1M256 614.5h1M257 614.5h1M261 613.5h1M262 613.5h1M263 613.5h1M267 612.5h1M268 612.5h1M269 612.5h1M273 610.5h1M274 610.5h1M275 610.5h1M279 608.5h1M280 607.5h1M281 606.5h1M285 604.5h1M286 603.5h1M287 602.5h1M291 599.5h1M292 598.5h1M293 597.5h1M297 593.5h1M298 592.5h1M299 591.5h1M303 588.5h1M304 588.5h1M305 587.5h1M309 586.5h1M310 585.5h1M311 584.5h1M315 581.5h1M316 581.5h1M317 580.5h1M320 576.5h1M321 575.5h1M322 574.5h1M325 570.5h1M326 569.5h1M327 568.5h1M330 564.5h1M331 563.5h1M332 562.5h1M336 558.5h1M337 557.5h1M337 556.5h1M341 552.5h1M342 551.5h1M343 550.5h1M347 546.5h1M348 545.5h1M349 544.5h1M353 540.5h1M354 539.5h1M355 538.5h1M359 534.5h1M360 533.5h1M361 532.5h1M365 528.5h1M366 527.5h1M367 526.5h1M370 522.5h1M371 521.5h1M371 520.5h1M375 516.5h1M376 515.5h1M377 514.5h1M380 510.5h1M381 509.5h1M382 508.5h1M386 506.5h1M387 506.5h1M388 505.5h1M392 506.5h1M393 507.5h1M394 507.5h1M398 508.5h1M399 508.5h1M400 508.5h1M404 507.5h1M405 507.5h1M406 507.5h1M410 506.5h1M411 505.5h1M412 505.5h1M416 503.5h1M417 503.5h1M418 502.5h1M422 501.5h1M423 500.5h1M424 500.5h1M428 498.5h1M429 498.5h1M430 498.5h1M434 496.5h1M435 496.5h1M436 495.5h1M440 494.5h1M441 494.5h1M442 494.5h1M446 492.5h1M447 492.5h1M448 491.5h1M452 489.5h1M453 489.5h1M454 488.5h1M458 485.5h1M459 484.5h1M460 484.5h1M464 481.5h1M465 481.5h1M466 480.5h1M470 479.5h1M471 478.5h1M472 478.5h1M476 477.5h1M477 477.5h1M478 477.5h1M482 475.5h1M483 475.5h1M484 474.5h1M488 474.5h1M489 473.5h1M490 473.5h1M494 473.5h1M495 474.5h1M496 474.5h1M500 476.5h1M501 476.5h1M502 476.5h1M506 476.5h1M507 476.5h1M508 476.5h1M512 478.5h1M513 478.5h1M514 479.5h1M518 480.5h1M519 480.5h1M520 480.5h1M524 480.5h1M525 480.5h1M526 480.5h1M530 479.5h1M531 478.5h1M532 478.5h1M536 478.5h1M537 477.5h1M538 477.5h1M542 477.5h1M543 478.5h1M544 478.5h1M548 479.5h1M549 479.5h1M550 479.5h1M554 477.5h1M555 477.5h1M556 476.5h1M560 473.5h1M561 472.5h1M561 471.5h1M565 467.5h1M566 466.5h1M567 465.5h1M571 462.5h1M572 461.5h1M573 460.5h1M577 456.5h1M578 455.5h1M579 454.5h1M583 450.5h1M584 449.5h1M585 448.5h1M589 444.5h1M590 443.5h1M591 442.5h1M594 438.5h1M595 437.5h1M596 436.5h1M600 433.5h1M601 432.5h1M602 431.5h1M606 428.5h1M607 427.5h1M608 426.5h1M612 422.5h1M613 421.5h1M614 420.5h1M618 416.5h1M619 415.5h1M620 414.5h1M623 410.5h1M624 409.5h1M625 408.5h1M628 404.5h1M629 403.5h1M630 402.5h1M634 399.5h1M635 398.5h1M636 397.5h1M640 394.5h1M641 393.5h1M642 393.5h1M646 390.5h1M647 389.5h1M648 388.5h1M652 385.5h1M653 384.5h1M654 384.5h1M658 382.5h1M659 382.5h1M660 381.5h1M664 380.5h1M665 379.5h1M666 379.5h1M670 377.5h1M671 377.5h1M672 376.5h1M676 374.5h1M677 374.5h1M678 373.5h1M682 371.5h1M683 370.5h1M684 370.5h1M688 369.5h1M689 368.5h1M690 368.5h1M694 368.5h1M695 367.5h1M696 367.5h1M700 365.5h1M701 365.5h1M702 365.5h1M706 363.5h1M707 363.5h1M708 362.5h1M712 360.5h1M713 360.5h1M714 359.5h1M718 358.5h1M719 357.5h1M720 357.5h1M724 355.5h1M725 355.5h1M726 355.5h1M730 355.5h1M731 355.5h1M732 355.5h1M736 355.5h1M737 355.5h1M738 355.5h1M742 355.5h1M743 354.5h1M744 354.5h1M748 353.5h1M749 353.5h1M750 353.5h1M754 355.5h1M755 355.5h1M756 356.5h1M760 356.5h1M761 357.5h1M762 357.5h1M766 358.5h1M767 359.5h1M768 360.5h1M772 363.5h1M773 364.5h1M774 365.5h1M778 367.5h1M779 367.5h1M780 368.5h1M784 371.5h1M785 372.5h1M786 372.5h1M790 376.5h1M791 376.5h1M792 377.5h1M796 379.5h1M797 380.5h1M798 381.5h1M802 383.5h1M803 384.5h1M804 384.5h1M808 386.5h1M809 387.5h1M810 387.5h1M814 388.5h1M815 387.5h1M816 387.5h1M820 385.5h1M821 385.5h1M822 384.5h1M826 382.5h1M827 382.5h1M828 381.5h1M832 380.5h1M833 379.5h1M834 379.5h1M838 378.5h1M839 377.5h1M840 377.5h1M844 375.5h1M845 375.5h1M846 374.5h1M850 372.5h1M851 372.5h1M852 371.5h1M856 369.5h1M857 369.5h1M858 368.5h1M862 366.5h1M863 366.5h1M864 365.5h1M868 363.5h1M869 363.5h1M870 363.5h1M874 361.5h1M875 361.5h1M876 360.5h1M880 359.5h1M881 359.5h1M882 359.5h1M886 358.5h1M887 357.5h1M888 357.5h1M892 355.5h1M893 355.5h1M894 356.5h1M898 359.5h1M899 360.5h1M900 360.5h1M903 364.5h1M904 365.5h1M905 366.5h1M908 370.5h1M909 371.5h1M910 372.5h1M913 376.5h1M914 377.5h1M915 378.5h1M918 382.5h1M918 383.5h1M919 384.5h1M922 388.5h1M923 389.5h1M924 390.5h1M927 394.5h1M928 395.5h1M929 396.5h1M933 400.5h1M934 401.5h1M935 402.5h1M939 405.5h1M940 405.5h1M941 406.5h1M945 410.5h1M945 411.5h1M946 412.5h1M950 415.5h1M951 416.5h1M952 416.5h1M956 418.5h1M957 418.5h1M958 419.5h1M962 422.5h1M963 423.5h1M964 423.5h1" stroke="#ff0000" fill="none"/>
<path d="M5 161.5h1M6 161.5h1M7 162.5h1M11 163.5h1M12 163.5h1M13 163.5h1M17 165.5h1M18 165.5h1M19 165.5h1M23 168.5h1M24 169.5h1M25 170.5h1M29 174.5h1M30 175.5h1M31 176.5h1M35 180.5h1M36 181.5h1M37 182.5h1M41 186.5h1M42 186.5h1M43 187.5h1M47 191.5h1M48 191.5h1M49 192.5h1M53 195.5h1M54 196.5h1M55 197.5h1M59 200.5h1M60 201.5h1M61 202.5h1M65 206.5h1M66 206.5h1M67 207.5h1M70 211.5h1M71 212.5h1M72 213.5h1M75 217.5h1M76 218.5h1M76 219.5h1M80 223.5h1M81 224.5h1M81 225.5h1M85 229.5h1M86 230.5h1M87 231.5h1M91 234.5h1M92 234.5h1M93 235.5h1M97 238.5h1M98 238.5h1M99 239.5h1M103 241.5h1M104 241.5h1M105 242.5h1M109 243.5h1M110 243.5h1M111 243.5h1M115 242.5h1M116 242.5h1M117 242.5h1M121 241.5h1M122 241.5h1M123 240.5h1M127 240.5h1M128 240.5h1M129 240.5h1M133 240.5h1M134 240.5h1M135 240.5h1M139 240.5h1M140 240.5h1M141 240.5h1M145 241.5h1M146 241.5h1M147 242.5h1M151 243.5h1M152 244.5h1M153 244.5h1M157 246.5h1M158 246.5h1M159 247.5h1M163 248.5h1M164 249.5h1M165 249.5h1M169 250.5h1M170 250.5h1M171 250.5h1M175 250.5h1M176 250.5h1M177 249.5h1M181 249.5h1M182 250.5h1M183 250.5h1M187 253.5h1M188 253.5h1M189 254.5h1M192 258.5h1M193 259.5h1M193 260.5h1M196 264.5h1M197 265.5h1M198 266.5h1M200 270.5h1M201 271.5h1M202 272.5h1M204 276.5h1M205 277.5h1M206 278.5h1M209 282.5h1M209 283.5h1M210 284.5h1M213 288.5h1M214 289.5h1M215 290.5h1M219 294.5h1M220 295.5h1M221 296.5h1M225 299.5h1M226 299.5h1M227 300.5h1M231 302.5h1M232 303.5h1M233 303.5h1M237 305.5h1M238 306.5h1M239 306.5h1M243 309.5h1M244 309.5h1M245 310.5h1M249 309.5h1M250 309.5h1M251 309.5h1M255 308.5h1M256 308.5h1M257 308.5h1M261 307.5h1M262 307.5h1M263 307.5h1M267 307.5h1M268 307.5h1M269 307.5h1M273 305.5h1M274 304.5h1M275 304.5h1M279 302.5h1M280 301.5h1M281 301.5h1M285 299.5h1M286 298.5h1M287 297.5h1M291 293.5h1M292 292.5h1M293 291.5h1M297 287.5h1M298 287.5h1M299 286.5h1M303 283.5h1M304 283.5h1M305 282.5h1M309 281.5h1M310 280.5h1M311 279.5h1M315 276.5h1M316 275.5h1M317 274.5h1M320 270.5h1M321 269.5h1M322 268.5h1M325 264.5h1M326 263.5h1M327 262.5h1M331 258.5h1M332 257.5h1M333 256.5h1M336 252.5h1M337 251.5h1M338 250.5h1M341 246.5h1M342 245.5h1M343 244.5h1M347 240.5h1M348 239.5h1M349 238.5h1M353 234.5h1M354 233.5h1M355 232.5h1M359 228.5h1M360 227.5h1M361 226.5h1M365 222.5h1M366 221.5h1M367 220.5h1M370 216.5h1M371 215.5h1M371 214.5h1M375 210.5h1M376 209.5h1M377 208.5h1M380 204.5h1M381 203.5h1M382 202.5h1M386 200.5h1M387 200.5h1M388 199.5h1M392 200.5h1M393 201.5h1M394 201.5h1M398 202.5h1M399 202.5h1M400 202.5h1M404 202.5h1M405 202.5h1M406 202.5h1M410 201.5h1M411 200.5h1M412 200.5h1M416 198.5h1M417 197.5h1M418 197.5h1M422 195.5h1M423 194.5h1M424 194.5h1M428 192.5h1M429 192.5h1M430 192.5h1M434 190.5h1M435 190.5h1M436 189.5h1M440 188.5h1M441 188.5h1M442 188.5h1M446 186.5h1M447 186.5h1M448 185.5h1M452 183.5h1M453 183.5h1M454 182.5h1M458 179.5h1M459 178.5h1M460 178.5h1M464 175.5h1M465 175.5h1M466 174.5h1M470 173.5h1M471 172.5h1M472 172.5h1M476 171.5h1M477 171.5h1M478 171.5h1M482 169.5h1M483 169.5h1M484 168.5h1M488 168.5h1M489 167.5h1M490 167.5h1M494 167.5h1M495 168.5h1M496 168.5h1M500 170.5h1M501 170.5h1M502 170.5h1M506 170.5h1M507 170.5h1M508 170.5h1M512 172.5h1M513 172.5h1M514 173.5h1M518 174.5h1M519 174.5h1M520 174.5h1M524 175.5h1M525 175.5h1M526 175.5h1M530 173.5h1M531 173.5h1M532 172.5h1M536 172.5h1M537 171.5h1M538 171.5h1M542 171.5h1M543 172.5h1M544 172.5h1M548 173.5h1M549 173.5h1M550 173.5h1M554 171.5h1M555 171.5h1M556 170.5h1M560 167.5h1M561 166.5h1M562 165.5h1M566 161.5h1M567 160.5h1M568 159.5h1M572 155.5h1M573 154.5h1M574 153.5h1M578 149.5h1M579 148.5h1M580 147.5h1M584 143.5h1M585 142.5h1M586 141.5h1M590 137.5h1M591 136.5h1M592 135.5h1M596 131.5h1M597 130.5h1M598 129.5h1M602 126.5h1M603 125.5h1M604 124.5h1M608 120.5h1M609 119.5h1M610 118.5h1M614 114.5h1M615 113.5h1M616 112.5h1M620 108.5h1M621 107.5h1M622 106.5h1M946 106.5h1M947 107.5h1M948 108.5h1M952 110.5h1M953 111.5h1M954 111.5h1M958 113.5h1M959 114.5h1M960 115.5h1M964 118.5h1" stroke="#ff0000" fill="none"/>
<path d="M5 539.5h1M6 539.5h1M7 540.5h1M11 541.5h1M12 541.5h1M13 541.5h1M17 543.5h1M18 543.5h1M19 543.5h1M23 546.5h1M24 547.5h1M25 548.5h1M29 552.5h1M30 553.5h1M31 554.5h1M35 558.5h1M36 559.5h1M37 560.5h1M41 564.5h1M42 564.5h1M43 565.5h1M47 569.5h1M48 569.5h1M49 570.5h1M53 573.5h1M54 574.5h1M55 575.5h1M59 578.5h1M60 579.5h1M61 580.5h1M65 584.5h1M66 584.5h1M67 585.5h1M70 589.5h1M71 590.5h1M72 591.5h1M75 595.5h1M76 596.5h1M76 597.5h1M80 601.5h1M81 602.5h1M81 603.5h1M85 607.5h1M86 608.5h1M87 609.5h1M91 612.5h1M92 612.5h1M93 613.5h1M97 616.5h1M98 616.5h1M99 617.5h1M103 619.5h1M104 619.5h1M105 620.5h1M109 621.5h1M110 621.5h1M111 621.5h1M115 620.5h1M116 620.5h1M117 620.5h1M121 619.5h1M122 619.5h1M123 618.5h1M127 618.5h1M128 618.5h1M129 618.5h1M133 618.5h1M134 618.5h1M135 618.5h1M139 618.5h1M140 618.5h1M141 618.5h1M145 619.5h1M146 619.5h1M147 620.5h1M151 621.5h1M152 622.5h1M153 622.5h1M157 624.5h1M158 624.5h1M159 625.5h1M163 626.5h1M164 627.5h1M165 627.5h1M169 628.5h1M170 628.5h1M171 628.5h1M175 628.5h1M176 628.5h1M177 627.5h1M181 627.5h1M182 628.5h1M183 628.5h1M187 631.5h1M188 631.5h1M189 632.5h1M192 636.5h1M193 637.5h1M193 638.5h1M196 642.5h1M197 643.5h1M198 644.5h1M200 648.5h1M201 649.5h1M202 650.5h1M204 654.5h1M205 655.5h1M206 656.5h1M209 660.5h1M209 661.5h1M210 662.5h1M213 666.5h1M214 667.5h1M215 668.5h1M219 672.5h1M291 671.5h1M292 670.5h1M293 669.5h1M297 665.5h1M298 665.5h1M299 664.5h1M303 661.5h1M304 661.5h1M305 660.5h1M309 659.5h1M310 658.5h1M311 657.5h1M315 654.5h1M316 653.5h1M317 652.5h1M320 648.5h1M321 647.5h1M322 646.5h1M325 642.5h1M326 641.5h1M327 640.5h1M331 636.5h1M332 635.5h1M333 634.5h1M336 630.5h1M337 629.5h1M338 628.5h1M341 624.5h1M342 623.5h1M343 622.5h1M347 618.5h1M348 617.5h1M349 616.5h1M353 612.5h1M354 611.5h1M355 610.5h1M359 606.5h1M360 605.5h1M361 604.5h1M365 600.5h1M366 599.5h1M367 598.5h1M370 594.5h1M371 593.5h1M371 592.5h1M375 588.5h1M376 587.5h1M377 586.5h1M380 582.5h1M381 581.5h1M382 580.5h1M386 578.5h1M387 578.5h1M388 577.5h1M392 578.5h1M393 579.5h1M394 579.5h1M398 580.5h1M399 580.5h1M400 580.5h1M404 580.5h1M405 580.5h1M406 580.5h1M410 579.5h1M411 578.5h1M412 578.5h1M416 576.5h1M417 575.5h1M418 575.5h1M422 573.5h1M423 572.5h1M424 572.5h1M428 570.5h1M429 570.5h1M430 570.5h1M434 568.5h1M435 568.5h1M436 567.5h1M440 566.5h1M441 566.5h1M442 566.5h1M446 564.5h1M447 564.5h1M448 563.5h1M452 561.5h1M453 561.5h1M454 560.5h1M458 557.5h1M459 556.5h1M460 556.5h1M464 553.5h1M465 553.5h1M466 552.5h1M470 551.5h1M471 550.5h1M472 550.5h1M476 549.5h1M477 549.5h1M478 549.5h1M482 547.5h1M483 547.5h1M484 546.5h1M488 546.5h1M489 545.5h1M490 545.5h1M494 545.5h1M495 546.5h1M496 546.5h1M500 548.5h1M501 548.5h1M502 548.5h1M506 548.5h1M507 548.5h1M508 548.5h1M512 550.5h1M513 550.5h1M514 551.5h1M518 552.5h1M519 552.5h1M520 552.5h1M524 553.5h1M525 553.5h1M526 553.5h1M530 551.5h1M531 551.5h1M532 550.5h1M536 550.5h1M537 549.5h1M538 549.5h1M542 549.5h1M543 550.5h1M544 550.5h1M548 551.5h1M549 551.5h1M550 551.5h1M554 549.5h1M555 549.5h1M556 548.5h1M560 545.5h1M561 544.5h1M562 543.5h1M566 539.5h1M567 538.5h1M568 537.5h1M572 533.5h1M573 532.5h1M574 531.5h1M578 527.5h1M579 526.5h1M580 525.5h1M584 521.5h1M585 520.5h1M586 519.5h1M590 515.5h1M591 514.5h1M592 513.5h1M596 509.5h1M597 508.5h1M598 507.5h1M602 504.5h1M603 503.5h1M604 502.5h1M608 498.5h1M609 497.5h1M610 496.5h1M614 492.5h1M615 491.5h1M616 490.5h1M620 486.5h1M621 485.5h1M622 484.5h1M625 480.5h1M626 479.5h1M627 478.5h1M630 474.5h1M631 473.5h1M632 472.5h1M636 469.5h1M637 468.5h1M638 467.5h1M642 465.5h1M643 464.5h1M644 464.5h1M648 461.5h1M649 460.5h1M650 459.5h1M654 457.5h1M655 456.5h1M656 456.5h1M660 454.5h1M661 454.5h1M662 453.5h1M666 451.5h1M667 451.5h1M668 450.5h1M672 448.5h1M673 448.5h1M674 447.5h1M678 445.5h1M679 445.5h1M680 444.5h1M684 442.5h1M685 441.5h1M686 441.5h1M690 441.5h1M691 441.5h1M692 441.5h1M696 439.5h1M697 439.5h1M698 438.5h1M702 437.5h1M703 436.5h1M704 436.5h1M708 434.5h1M709 434.5h1M710 433.5h1M714 431.5h1M715 431.5h1M716 430.5h1M720 429.5h1M721 428.5h1M722 428.5h1M726 427.5h1M727 427.5h1M728 427.5h1M732 427.5h1M733 427.5h1M734 427.5h1M738 428.5h1M739 428.5h1M740 428.5h1M744 427.5h1M745 426.5h1M746 426.5h1M750 425.5h1M751 426.5h1M752 426.5h1M756 428.5h1M757 428.5h1M758 428.5h1M762 429.5h1M763 430.5h1M764 430.5h1M768 432.5h1M769 433.5h1M770 434.5h1M774 437.5h1M775 437.5h1M776 438.5h1M780 440.5h1M781 440.5h1M782 441.5h1M786 445.5h1M787 446.5h1M788 447.5h1M792 450.5h1M793 450.5h1M794 451.5h1M798 453.5h1M799 453.5h1M800 454.5h1M804 456.5h1M805 457.5h1M806 457.5h1M810 459.5h1M811 459.5h1M812 460.5h1M816 459.5h1M817 458.5h1M818 458.5h1M822 456.5h1M823 456.5h1M824 455.5h1M828 453.5h1M829 453.5h1M830 453.5h1M834 451.5h1M835 451.5h1M836 450.5h1M840 449.5h1M841 448.5h1M842 448.5h1M846 446.5h1M847 446.5h1M848 445.5h1M852 443.5h1M853 443.5h1M854 442.5h1M858 440.5h1M859 440.5h1M860 439.5h1M864 437.5h1M865 437.5h1M866 436.5h1M870 435.5h1M871 434.5h1M872 434.5h1M876 432.5h1M877 432.5h1M878 432.5h1M882 431.5h1M883 430.5h1M884 430.5h1M888 429.5h1M889 428.5h1M890 428.5h1M894 428.5h1M895 429.5h1M896 429.5h1M900 432.5h1M901 433.5h1M902 434.5h1M905 438.5h1M906 439.5h1M907 440.5h1M910 444.5h1M911 445.5h1M911 446.5h1M915 450.5h1M915 451.5h1M916 452.5h1M919 456.5h1M920 457.5h1M921 458.5h1M924 462.5h1M924 463.5h1M925 464.5h1M929 468.5h1M929 469.5h1M930 470.5h1M934 474.5h1M935 475.5h1M936 475.5h1M940 478.5h1M941 479.5h1M942 480.5h1M946 484.5h1M947 485.5h1M948 486.5h1M952 488.5h1M953 489.5h1M954 489.5h1M958 491.5h1M959 492.5h1M960 493.5h1M964 496.5h1" stroke="#ff0000" fill="none"/>
<polyline points="5,339.0 13,342.0 21,346.3 29,356.1 37,366.8 45,374.7 53,382.3 61,390.2 69,398.8 77,410.7 85,421.2 93,427.9 101,433.6 109,436.5 117,435.3 125,432.5 133,431.9 141,431.7 149,433.6 157,438.5 165,442.2 173,442.1 181,441.2 189,446.8 197,459.4 205,472.9 213,484.8 221,493.0 229,498.4 237,502.8 245,507.6 253,505.7 261,503.0 269,501.9 277,496.9 285,491.6 293,482.9 301,473.8 309,470.2 317,462.9 325,451.1 333,441.3 341,430.1 349,421.4 357,412.6 365,404.2 373,393.3 381,383.6 389,379.4 397,383.0 405,383.5 413,381.7 421,377.4 429,374.5 437,371.4 445,369.9 453,365.1 461,359.0 469,354.6 477,353.3 485,350.5 493,349.6 501,353.5 509,354.1 517,358.7 525,360.1 533,357.4 541,356.4 549,358.7 557,355.5 565,346.2 573,337.7 581,328.6 589,320.3 597,311.0 605,304.0 613,295.0 621,286.7 629,275.8 637,268.8 645,263.9 653,256.9 661,254.3 669,251.3 677,246.8 685,241.8 693,242.4 701,239.2 709,236.2 717,232.5 725,229.3 733,230.5 741,231.4 749,229.2 757,233.0 765,235.4 773,242.9 781,248.1 789,257.3 797,262.9 805,268.0 813,271.6 821,268.5 829,263.8 837,260.2 845,256.7 853,252.7 861,247.5 869,243.1 877,240.2 885,237.8 893,235.0 901,242.2 909,254.1 917,265.3 925,278.3 933,287.5 941,294.4 949,303.5 957,307.0 965,314.0" fill="none" stroke="#00ffff" stroke-width="2.2"/>
<polyline points="5,350.0 13,351.9 21,354.8 29,362.7 37,371.5 45,378.0 53,384.3 61,391.0 69,398.3 77,408.7 85,417.8 93,423.8 101,429.1 109,431.9 117,431.1 125,429.0 133,428.7 141,428.7 149,430.6 157,435.0 165,438.4 173,438.6 181,438.1 189,443.1 197,454.3 205,466.3 213,477.0 221,484.6 229,489.8 237,494.2 245,498.9 253,497.9 261,496.1 269,495.7 277,491.7 285,487.6 293,480.3 301,472.7 309,469.6 317,463.4 325,453.2 333,444.6 341,434.7 349,426.9 357,418.9 365,411.2 373,401.4 381,392.4 389,388.2 397,390.7 405,390.6 413,388.6 421,384.4 429,381.4 437,378.3 445,376.5 453,371.9 461,366.2 469,361.9 477,360.3 485,357.4 493,356.1 501,359.1 509,359.1 517,362.8 525,363.7 533,361.2 541,360.0 549,361.8 557,358.8 565,350.6 573,342.9 581,334.7 589,327.2 597,318.6 605,312.1 613,303.7 621,296.0 629,286.0 637,279.3 645,274.3 653,267.5 661,264.6 669,261.2 677,256.7 685,251.7 693,251.5 701,248.2 709,244.9 717,241.1 725,237.8 733,238.2 741,238.5 749,236.1 757,238.9 765,240.6 773,246.7 781,250.9 789,258.7 797,263.4 805,267.8 813,270.9 821,268.3 829,264.2 837,261.1 845,258.0 853,254.4 861,249.9 869,245.9 877,243.2 885,241.0 893,238.3 901,244.3 909,254.4 917,264.0 925,275.3 933,283.5 941,289.7 949,297.8 957,301.3 965,307.7" fill="none" stroke="#00ffff" stroke-width="2.2"/>
<path d="M5 668 L10 673 L5 673 Z" fill="#508a8a"/>
</g>
</g>
<rect x="0" y="693" width="1024" height="1" fill="#000"/>
<rect x="0" y="713" width="1024" height="1" fill="#fff"/>
<rect x="0" y="734" width="1024" height="4" fill="#2f6ad8"/>
<rect x="0" y="734" width="1024" height="1" fill="#5a8ee8"/>
</svg>
<div class="abs" style="left:8px;top:106px;width:194px;height:12px;background:#fff"></div><div class="tx" style="left:9.5px;top:107.93px;font-size:9.3px;line-height:9.3px;color:#000;font-weight:normal;transform:scaleX(1.0204022163109496);transform-origin:0 0;">USDCHF,Daily&nbsp;&nbsp;1.2858 1.2869 1.2757 1.2765</div><div class="tx" style="left:9.5px;top:130.13px;font-size:9.3px;line-height:9.3px;color:#000;font-weight:normal;transform:scaleX(1.0323256250936874);transform-origin:0 0;">RISK MODEL #2 (1-4)</div><div class="tx" style="left:9.5px;top:154.33px;font-size:9.3px;line-height:9.3px;color:#000;font-weight:normal;transform:scaleX(1.0117988956698634);transform-origin:0 0;">EMA24 - 1.2946</div><div class="tx" style="left:9.5px;top:166.13px;font-size:9.3px;line-height:9.3px;color:#000;font-weight:normal;transform:scaleX(1.0117988956698634);transform-origin:0 0;">EMA28 - 1.2957</div><div class="tx" style="left:9.5px;top:189.93px;font-size:9.3px;line-height:9.3px;color:#000;font-weight:normal;transform:scaleX(1.0454082243782883);transform-origin:0 0;">F+1 - 1.3101</div><div class="tx" style="left:9.5px;top:201.93px;font-size:9.3px;line-height:9.3px;color:#000;font-weight:normal;transform:scaleX(1.0539206827155463);transform-origin:0 0;">F+2 - 1.319</div><div class="tx" style="left:9.5px;top:213.73px;font-size:9.3px;line-height:9.3px;color:#000;font-weight:normal;transform:scaleX(1.0454082243782883);transform-origin:0 0;">F+3 - 1.3334</div><div class="tx" style="left:9.5px;top:237.53px;font-size:9.3px;line-height:9.3px;color:#000;font-weight:normal;transform:scaleX(1.0185637122798088);transform-origin:0 0;">F-1 - 1.2813</div><div class="tx" style="left:9.5px;top:249.53px;font-size:9.3px;line-height:9.3px;color:#000;font-weight:normal;transform:scaleX(1.0185637122798088);transform-origin:0 0;">F-2 - 1.2724</div><div class="tx" style="left:9.5px;top:261.33px;font-size:9.3px;line-height:9.3px;color:#000;font-weight:normal;transform:scaleX(1.0244605675727607);transform-origin:0 0;">F-3 - 1.258</div><div class="abs" style="left:983px;top:117px;width:3px;height:1px;background:#000"></div><div class="tx" style="left:988.5px;top:112.13px;font-size:9.3px;line-height:9.3px;color:#000;font-weight:normal;transform:scaleX(1.0195141377937078);transform-origin:0 0;">1.3320</div><div class="abs" style="left:983px;top:149px;width:3px;height:1px;background:#000"></div><div class="tx" style="left:988.5px;top:144.13px;font-size:9.3px;line-height:9.3px;color:#000;font-weight:normal;transform:scaleX(1.0195141377937078);transform-origin:0 0;">1.3255</div><div class="abs" style="left:983px;top:182px;width:3px;height:1px;background:#000"></div><div class="tx" style="left:988.5px;top:177.13px;font-size:9.3px;line-height:9.3px;color:#000;font-weight:normal;transform:scaleX(1.0195141377937078);transform-origin:0 0;">1.3190</div><div class="abs" style="left:983px;top:214px;width:3px;height:1px;background:#000"></div><div class="tx" style="left:988.5px;top:209.13px;font-size:9.3px;line-height:9.3px;color:#000;font-weight:normal;transform:scaleX(1.0195141377937078);transform-origin:0 0;">1.3125</div><div class="abs" style="left:983px;top:247px;width:3px;height:1px;background:#000"></div><div class="tx" style="left:988.5px;top:242.13px;font-size:9.3px;line-height:9.3px;color:#000;font-weight:normal;transform:scaleX(1.0195141377937078);transform-origin:0 0;">1.3060</div><div class="abs" style="left:983px;top:280px;width:3px;height:1px;background:#000"></div><div class="tx" style="left:988.5px;top:275.13px;font-size:9.3px;line-height:9.3px;color:#000;font-weight:normal;transform:scaleX(1.0195141377937078);transform-origin:0 0;">1.2995</div><div class="abs" style="left:983px;top:312px;width:3px;height:1px;background:#000"></div><div class="tx" style="left:988.5px;top:307.13px;font-size:9.3px;line-height:9.3px;color:#000;font-weight:normal;transform:scaleX(1.0195141377937078);transform-origin:0 0;">1.2930</div><div class="abs" style="left:983px;top:345px;width:3px;height:1px;background:#000"></div><div class="tx" style="left:988.5px;top:340.13px;font-size:9.3px;line-height:9.3px;color:#000;font-weight:normal;transform:scaleX(1.0195141377937078);transform-origin:0 0;">1.2865</div><div class="abs" style="left:983px;top:377px;width:3px;height:1px;background:#000"></div><div class="tx" style="left:988.5px;top:372.13px;font-size:9.3px;line-height:9.3px;color:#000;font-weight:normal;transform:scaleX(1.0195141377937078);transform-origin:0 0;">1.2800</div><div class="abs" style="left:983px;top:410px;width:3px;height:1px;background:#000"></div><div class="tx" style="left:988.5px;top:405.13px;font-size:9.3px;line-height:9.3px;color:#000;font-weight:normal;transform:scaleX(1.0195141377937078);transform-origin:0 0;">1.2735</div><div class="abs" style="left:983px;top:443px;width:3px;height:1px;background:#000"></div><div class="tx" style="left:988.5px;top:438.13px;font-size:9.3px;line-height:9.3px;color:#000;font-weight:normal;transform:scaleX(1.0195141377937078);transform-origin:0 0;">1.2670</div><div class="abs" style="left:983px;top:475px;width:3px;height:1px;background:#000"></div><div class="tx" style="left:988.5px;top:470.13px;font-size:9.3px;line-height:9.3px;color:#000;font-weight:normal;transform:scaleX(1.0195141377937078);transform-origin:0 0;">1.2605</div><div class="abs" style="left:983px;top:508px;width:3px;height:1px;background:#000"></div><div class="tx" style="left:988.5px;top:503.13px;font-size:9.3px;line-height:9.3px;color:#000;font-weight:normal;transform:scaleX(1.0195141377937078);transform-origin:0 0;">1.2540</div><div class="abs" style="left:983px;top:541px;width:3px;height:1px;background:#000"></div><div class="tx" style="left:988.5px;top:536.13px;font-size:9.3px;line-height:9.3px;color:#000;font-weight:normal;transform:scaleX(1.0195141377937078);transform-origin:0 0;">1.2475</div><div class="abs" style="left:983px;top:573px;width:3px;height:1px;background:#000"></div><div class="tx" style="left:988.5px;top:568.13px;font-size:9.3px;line-height:9.3px;color:#000;font-weight:normal;transform:scaleX(1.0195141377937078);transform-origin:0 0;">1.2410</div><div class="abs" style="left:983px;top:606px;width:3px;height:1px;background:#000"></div><div class="tx" style="left:988.5px;top:601.13px;font-size:9.3px;line-height:9.3px;color:#000;font-weight:normal;transform:scaleX(1.0195141377937078);transform-origin:0 0;">1.2345</div><div class="abs" style="left:983px;top:638px;width:3px;height:1px;background:#000"></div><div class="tx" style="left:988.5px;top:633.13px;font-size:9.3px;line-height:9.3px;color:#000;font-weight:normal;transform:scaleX(1.0195141377937078);transform-origin:0 0;">1.2280</div><div class="abs" style="left:983px;top:671px;width:3px;height:1px;background:#000"></div><div class="tx" style="left:988.5px;top:666.13px;font-size:9.3px;line-height:9.3px;color:#000;font-weight:normal;transform:scaleX(1.0195141377937078);transform-origin:0 0;">1.2215</div><div class="abs" style="left:984px;top:388px;width:36px;height:11px;background:#000"></div><div class="tx" style="left:988.5px;top:389.13px;font-size:9.3px;line-height:9.3px;color:#fff;font-weight:normal;transform:scaleX(1.0195141377937078);transform-origin:0 0;">1.2765</div><div class="abs" style="left:5px;top:673px;width:1px;height:3px;background:#000"></div><div class="tx" style="left:4.5px;top:678.13px;font-size:9.3px;line-height:9.3px;color:#000;font-weight:normal;transform:scaleX(0.9877445754261982);transform-origin:0 0;">29 Jul 2005</div><div class="abs" style="left:69px;top:673px;width:1px;height:3px;background:#000"></div><div class="tx" style="left:68.5px;top:678.13px;font-size:9.3px;line-height:9.3px;color:#000;font-weight:normal;transform:scaleX(0.9877445754261982);transform-origin:0 0;">10 Aug 2005</div><div class="abs" style="left:133px;top:673px;width:1px;height:3px;background:#000"></div><div class="tx" style="left:132.5px;top:678.13px;font-size:9.3px;line-height:9.3px;color:#000;font-weight:normal;transform:scaleX(0.9877445754261982);transform-origin:0 0;">22 Aug 2005</div><div class="abs" style="left:197px;top:673px;width:1px;height:3px;background:#000"></div><div class="tx" style="left:196.5px;top:678.13px;font-size:9.3px;line-height:9.3px;color:#000;font-weight:normal;transform:scaleX(0.9877445754261982);transform-origin:0 0;">1 Sep 2005</div><div class="abs" style="left:261px;top:673px;width:1px;height:3px;background:#000"></div><div class="tx" style="left:260.5px;top:678.13px;font-size:9.3px;line-height:9.3px;color:#000;font-weight:normal;transform:scaleX(0.9877445754261982);transform-origin:0 0;">13 Sep 2005</div><div class="abs" style="left:325px;top:673px;width:1px;height:3px;background:#000"></div><div class="tx" style="left:324.5px;top:678.13px;font-size:9.3px;line-height:9.3px;color:#000;font-weight:normal;transform:scaleX(0.9877445754261982);transform-origin:0 0;">23 Sep 2005</div><div class="abs" style="left:389px;top:673px;width:1px;height:3px;background:#000"></div><div class="tx" style="left:388.5px;top:678.13px;font-size:9.3px;line-height:9.3px;color:#000;font-weight:normal;transform:scaleX(0.9877445754261982);transform-origin:0 0;">5 Oct 2005</div><div class="abs" style="left:453px;top:673px;width:1px;height:3px;background:#000"></div><div class="tx" style="left:452.5px;top:678.13px;font-size:9.3px;line-height:9.3px;color:#000;font-weight:normal;transform:scaleX(0.9877445754261982);transform-origin:0 0;">17 Oct 2005</div><div class="abs" style="left:517px;top:673px;width:1px;height:3px;background:#000"></div><div class="tx" style="left:516.5px;top:678.13px;font-size:9.3px;line-height:9.3px;color:#000;font-weight:normal;transform:scaleX(0.9877445754261982);transform-origin:0 0;">27 Oct 2005</div><div class="abs" style="left:581px;top:673px;width:1px;height:3px;background:#000"></div><div class="tx" style="left:580.5px;top:678.13px;font-size:9.3px;line-height:9.3px;color:#000;font-weight:normal;transform:scaleX(0.9877445754261982);transform-origin:0 0;">8 Nov 2005</div><div class="abs" style="left:645px;top:673px;width:1px;height:3px;background:#000"></div><div class="tx" style="left:644.5px;top:678.13px;font-size:9.3px;line-height:9.3px;color:#000;font-weight:normal;transform:scaleX(0.9877445754261982);transform-origin:0 0;">18 Nov 2005</div><div class="abs" style="left:709px;top:673px;width:1px;height:3px;background:#000"></div><div class="tx" style="left:708.5px;top:678.13px;font-size:9.3px;line-height:9.3px;color:#000;font-weight:normal;transform:scaleX(0.9877445754261982);transform-origin:0 0;">30 Nov 2005</div><div class="abs" style="left:773px;top:673px;width:1px;height:3px;background:#000"></div><div class="tx" style="left:772.5px;top:678.13px;font-size:9.3px;line-height:9.3px;color:#000;font-weight:normal;transform:scaleX(0.9877445754261982);transform-origin:0 0;">12 Dec 2005</div><div class="abs" style="left:837px;top:673px;width:1px;height:3px;background:#000"></div><div class="tx" style="left:836.5px;top:678.13px;font-size:9.3px;line-height:9.3px;color:#000;font-weight:normal;transform:scaleX(0.9877445754261982);transform-origin:0 0;">22 Dec 2005</div><div class="abs" style="left:901px;top:673px;width:1px;height:3px;background:#000"></div><div class="tx" style="left:900.5px;top:678.13px;font-size:9.3px;line-height:9.3px;color:#000;font-weight:normal;transform:scaleX(0.9877445754261982);transform-origin:0 0;">3 Jan 2006</div><div class="abs" style="left:965px;top:673px;width:1px;height:3px;background:#000"></div><div class="tx" style="left:964.5px;top:678.13px;font-size:9.3px;line-height:9.3px;color:#000;font-weight:normal;transform:scaleX(0.9877445754261982);transform-origin:0 0;">13 Jan 2006</div>
<div class="tx" style="left:13.2px;top:697.29px;font-size:11px;line-height:11px;color:#7e7e7e;font-weight:normal;transform:scaleX(0.9371174943088872);transform-origin:0 0;">EURUSD,Weekly</div><div class="tx" style="left:114.5px;top:697.29px;font-size:11px;line-height:11px;color:#7e7e7e;font-weight:normal;transform:scaleX(0.9167104182652828);transform-origin:0 0;">EURGBP,Daily</div><div class="tx" style="left:203px;top:697.29px;font-size:11px;line-height:11px;color:#7e7e7e;font-weight:normal;transform:scaleX(0.8856143130652935);transform-origin:0 0;">GBPUSD,Daily</div><div class="tx" style="left:291px;top:697.29px;font-size:11px;line-height:11px;color:#7e7e7e;font-weight:normal;transform:scaleX(0.9517992298499536);transform-origin:0 0;">USDJPY,Weekly</div><div class="tx" style="left:390px;top:697.29px;font-size:11px;line-height:11px;color:#7e7e7e;font-weight:normal;transform:scaleX(0.9281560855705342);transform-origin:0 0;">EURUSD,H1</div><div class="tx" style="left:469.3px;top:697.29px;font-size:11px;line-height:11px;color:#7e7e7e;font-weight:normal;transform:scaleX(0.9194831604592663);transform-origin:0 0;">EURUSD,Daily</div><div class="tx" style="left:648px;top:697.29px;font-size:11px;line-height:11px;color:#7e7e7e;font-weight:normal;transform:scaleX(0.9863937387116195);transform-origin:0 0;">_SP500,Weekly (offline)</div><div class="tx" style="left:787px;top:697.29px;font-size:11px;line-height:11px;color:#7e7e7e;font-weight:normal;transform:scaleX(0.9354423886386475);transform-origin:0 0;">USDJPY,Daily</div><div class="tx" style="left:875.5px;top:697.29px;font-size:11px;line-height:11px;color:#7e7e7e;font-weight:normal;transform:scaleX(0.9303006094058458);transform-origin:0 0;">AUDUSD,Daily</div><div class="tx" style="left:967.4px;top:697.29px;font-size:11px;line-height:11px;color:#7e7e7e;font-weight:normal;transform:scaleX(0.8869901606256834);transform-origin:0 0;">USD</div><div class="abs" style="left:104px;top:696px;width:1px;height:13px;background:#6e6e6e"></div><div class="abs" style="left:192px;top:696px;width:1px;height:13px;background:#6e6e6e"></div><div class="abs" style="left:281px;top:696px;width:1px;height:13px;background:#6e6e6e"></div><div class="abs" style="left:380px;top:696px;width:1px;height:13px;background:#6e6e6e"></div><div class="abs" style="left:460px;top:696px;width:1px;height:13px;background:#6e6e6e"></div><div class="abs" style="left:776px;top:696px;width:1px;height:13px;background:#6e6e6e"></div><div class="abs" style="left:864px;top:696px;width:1px;height:13px;background:#6e6e6e"></div><div class="abs" style="left:956px;top:696px;width:1px;height:13px;background:#6e6e6e"></div><div class="abs" style="left:548px;top:693px;width:88px;height:19px;background:#fff;border:1px solid #000;border-top:none"></div><div class="tx" style="left:557.6px;top:697.29px;font-size:11px;line-height:11px;color:#000;font-weight:normal;transform:scaleX(0.9429033765073089);transform-origin:0 0;">USDCHF,Daily</div><svg class="abs" style="left:990px;top:696px" width="34" height="14"><path d="M5 7 L9.5 3 V11 Z M22 3 L26.5 7 L22 11 Z" fill="#000"/></svg>
<div class="tx" style="left:2px;top:720.09px;font-size:11px;line-height:11px;color:#000;font-weight:normal;transform:scaleX(0.9716411669472171);transform-origin:0 0;">For Help, press F1</div><div class="tx" style="left:325px;top:720.09px;font-size:11px;line-height:11px;color:#000;font-weight:normal;transform:scaleX(1.0329088387340815);transform-origin:0 0;">Default</div><div class="tx" style="left:929px;top:719.69px;font-size:11px;line-height:11px;color:#000;font-weight:normal;transform:scaleX(1.0254134076700316);transform-origin:0 0;">98/1 kb</div><div class="abs" style="left:319px;top:717px;width:1px;height:16px;background:#aca899"></div><div class="abs" style="left:320px;top:717px;width:1px;height:16px;background:#fff"></div><div class="abs" style="left:429px;top:717px;width:1px;height:16px;background:#aca899"></div><div class="abs" style="left:430px;top:717px;width:1px;height:16px;background:#fff"></div><div class="abs" style="left:529px;top:717px;width:1px;height:16px;background:#aca899"></div><div class="abs" style="left:530px;top:717px;width:1px;height:16px;background:#fff"></div><div class="abs" style="left:601px;top:717px;width:1px;height:16px;background:#aca899"></div><div class="abs" style="left:602px;top:717px;width:1px;height:16px;background:#fff"></div><div class="abs" style="left:673px;top:717px;width:1px;height:16px;background:#aca899"></div><div class="abs" style="left:674px;top:717px;width:1px;height:16px;background:#fff"></div><div class="abs" style="left:742px;top:717px;width:1px;height:16px;background:#aca899"></div><div class="abs" style="left:743px;top:717px;width:1px;height:16px;background:#fff"></div><div class="abs" style="left:812px;top:717px;width:1px;height:16px;background:#aca899"></div><div class="abs" style="left:813px;top:717px;width:1px;height:16px;background:#fff"></div><div class="abs" style="left:878px;top:717px;width:1px;height:16px;background:#aca899"></div><div class="abs" style="left:879px;top:717px;width:1px;height:16px;background:#fff"></div><svg class="abs" style="left:0;top:714px" width="1024" height="24"><g transform="translate(0,-714)"><rect x="884.0" y="718" width="1.5" height="12" fill="#808000"/><rect x="886.5" y="718" width="1.5" height="12" fill="#808000"/><rect x="889.0" y="718" width="1.5" height="12" fill="#808000"/><rect x="891.5" y="718" width="1.5" height="12" fill="#8a0000"/><rect x="894.0" y="718" width="1.5" height="12" fill="#8a0000"/><rect x="896.5" y="718" width="1.5" height="12" fill="#8a0000"/><rect x="899.0" y="718" width="1.5" height="12" fill="#8a0000"/><rect x="901.5" y="718" width="1.5" height="12" fill="#8a0000"/><rect x="904.0" y="718" width="1.5" height="12" fill="#8a0000"/><rect x="906.5" y="718" width="1.5" height="12" fill="#8a0000"/></g><path d="M1010 19 L1023 6 M1014 19 L1023 10 M1018 19 L1023 14" stroke="#b8b4a0" stroke-width="1.3"/></svg>
<svg class="abs" style="left:0;top:0" width="1024" height="738" shape-rendering="crispEdges">
<polygon points="85.1,576 87.4,575 88.4,576.8 89.5,576 90.6,576.8 93.2,575.2 95.5,576 96.8,577.5 95.8,579.1 96.8,579.8 97.8,581.4 97.8,583.7 96.5,585.3 93.6,587.6 92.3,588.7 89,588.5 88.4,589.5 84.8,588.7 83.5,587.6 81.2,585.6 80.2,583.7 79.1,582.4 79.3,581 80.2,579.1 81.2,578.1 83.2,577.2" fill="#000"/>
<polygon points="207,661.1 209.1,661.8 211.4,661.1 213.3,659.9 214.4,661.1 215.6,660.1 216.7,660.3 218.6,662 219.7,663.3 220.1,666 221.6,667.1 221.6,669.4 220.3,670.6 219.7,672.8 218.6,674.3 217.1,676.2 215.2,677.8 212.5,678.1 208.7,678.1 208.2,676.2 206.1,675.7 207.6,674 206.8,671.7 206.1,669.4 205.3,668.3 205.7,666 205.1,665.2 206.1,663.3 205.9,662" fill="#000"/>
<polygon points="355,264.7 357.9,259.8 361.5,257.8 366,260.7 366.8,262.7 366,268 361.5,271.6 357.1,268.8 355.4,266.3" fill="#000"/>
<polygon points="375.8,240.3 378.2,234.6 383.1,231 387.2,233 390,236.3 389.6,243.6 386.3,245.6 381.5,245.6 377.4,243.6 375,241.1" fill="#000"/>
<polygon points="635.9,113.1 638.3,114.1 640.7,116.2 641.5,118.2 642.8,120.2 642.2,121.4 642.8,122.7 641.5,124.7 639.9,126.7 637.9,128.2 634.6,130 631.8,128.4 630.6,125.9 628.5,123.5 627.3,121 628.1,118.2 630.2,117.8 631,116.2 633.4,114.5" fill="#000"/>
<polygon points="913.4,437.3 916.3,437.7 918.3,436.5 920.7,437.5 922.2,438.9 922.8,441 922.2,442.6 922.6,444 922,446.1 923.6,446.7 922,448.3 921.5,449.5 919.1,450.7 917.1,452 912.2,452.6 910.2,451.5 907.3,450.7 906.1,448.3 906.3,445.9 907.1,442.2 909.3,440.2 911.4,438.5" fill="#000"/>
</svg>
</body></html>
